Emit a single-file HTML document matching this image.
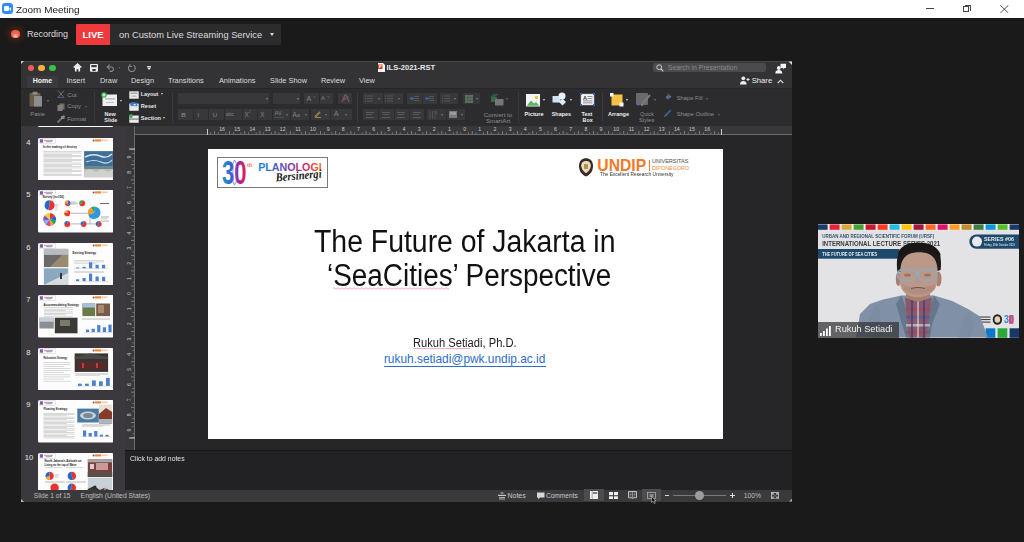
<!DOCTYPE html>
<html><head><meta charset="utf-8">
<style>
*{margin:0;padding:0;box-sizing:border-box}
html,body{width:1024px;height:542px;overflow:hidden;background:#1a1a1a;font-family:"Liberation Sans",sans-serif}
.a{position:absolute}
.t{position:absolute;white-space:nowrap;line-height:1}
</style></head><body>
<!-- Zoom title bar -->
<div class="a" style="left:0;top:0;width:1024px;height:18px;background:#fff"></div>
<div class="a" style="left:2px;top:3px;width:11px;height:11px;border-radius:3px;background:#2d8cff"></div>
<div class="a" style="left:4px;top:6px;width:5px;height:5px;border-radius:1px;background:#fff"></div>
<div class="a" style="left:9px;top:6.5px;width:0;height:0;border-top:2px solid transparent;border-bottom:2px solid transparent;border-right:2.5px solid #fff"></div>
<div class="t" style="left:16.4px;top:4.9px;font-size:9.4px;color:#222;transform:scaleX(1.06);transform-origin:0 0">Zoom Meeting</div>
<!-- window controls -->
<div class="a" style="left:926px;top:8px;width:8px;height:0.9px;background:#444"></div>
<div class="a" style="left:963px;top:6.2px;width:6.2px;height:6.2px;border:0.9px solid #444;background:#fff"></div>
<div class="a" style="left:964.6px;top:4.8px;width:6.2px;height:6.2px;border-top:0.9px solid #444;border-right:0.9px solid #444"></div>
<svg class="a" style="left:1000.3px;top:4.6px" width="8.7" height="8.3"><path d="M0.3 0.3L8.4 8M8.4 0.3L0.3 8" stroke="#444" stroke-width="0.9"/></svg>

<!-- recording bar -->
<div class="a" style="left:11.3px;top:29.7px;width:8.8px;height:8.8px;border-radius:50%;background:radial-gradient(circle at 50% 78%,#f6c8c0 0%,#f46a5c 40%,#f25848 70%);box-shadow:0 0 6px 3px rgba(100,40,15,.7)"></div>
<div class="t" style="left:27px;top:29.5px;font-size:9px;color:#ddd">Recording</div>
<div class="a" style="left:76px;top:24.3px;width:34px;height:20.7px;background:#ee3a3c;border-radius:1px 0 0 1px"></div>
<div class="t" style="left:82.5px;top:30.2px;font-size:9.5px;font-weight:bold;color:#fff">LIVE</div>
<div class="a" style="left:110px;top:24.3px;width:170.5px;height:20.7px;background:#2c2c2e;border-radius:0 1.5px 1.5px 0"></div>
<div class="t" style="left:119px;top:31.1px;font-size:9.3px;color:#dcdcdc">on Custom Live Streaming Service</div>
<div class="a" style="left:270px;top:33px;width:0;height:0;border-left:2.5px solid transparent;border-right:2.5px solid transparent;border-top:3px solid #ddd"></div>

<!-- PowerPoint window -->
<div class="a" id="ppt" style="left:21px;top:60.5px;width:771px;height:441px;background:#262628;overflow:hidden">
  <!-- title + tabs -->
  <div class="a" style="left:0;top:0;width:771px;height:27.5px;background:#333335"></div>
  <div class="a" style="left:0;top:0;width:771px;height:1px;background:#48484a"></div>
  <div class="a" style="left:0;top:27px;width:771px;height:1px;background:#262628"></div>
  <!-- ribbon -->
  <div class="a" style="left:0;top:28px;width:771px;height:37px;background:#2c2c2e"></div>
  <!-- thumbnails -->
<div class="a" style="left:37.5px;top:125.5px;width:75.8px;height:1.8px;background:#fdfdfd;border-radius:0 0 1.6px 1.6px"></div>
<svg class="a" style="left:37.5px;top:137.7px" width="75.8" height="42.50" viewBox="0 0 75.8 42.50"><rect x="0" y="0" width="75.8" height="42.5" rx="1.6" fill="#fdfdfd"/><rect x="1.3" y="0.6" width="16" height="4.6" fill="#fff" stroke="#b8b8c8" stroke-width="0.35"/><rect x="2" y="1.3" width="2.6" height="3.3" fill="#4a6fc8"/><rect x="3.6" y="1.3" width="1.2" height="3.3" fill="#d8406a"/><rect x="6" y="1.8" width="9" height="1.4" fill="#c8a0c8"/><rect x="8" y="3.2" width="6" height="1" fill="#9a9a9a"/><circle cx="55.6" cy="2.4" r="1" fill="#7a5a3a"/><rect x="57" y="1.3" width="6" height="2.2" fill="#f08a3a"/><rect x="63.5" y="1.5" width="6" height="1.6" fill="#f7c8a0"/><text x="4.9" y="9.9" font-family="Liberation Sans" font-weight="bold" font-size="3.3" fill="#222" textLength="34" lengthAdjust="spacingAndGlyphs">In the making of destiny</text><rect x="5.5" y="13.50" width="38.00" height="0.5" fill="#b4b4b4"/><rect x="5.5" y="14.75" width="38.00" height="0.5" fill="#b4b4b4"/><rect x="5.5" y="16.00" width="28.50" height="0.5" fill="#b4b4b4"/><rect x="5.5" y="17.25" width="38.00" height="0.5" fill="#b4b4b4"/><rect x="5.5" y="18.50" width="38.00" height="0.5" fill="#b4b4b4"/><rect x="5.5" y="19.75" width="28.50" height="0.5" fill="#b4b4b4"/><rect x="5.5" y="21.00" width="38.00" height="0.5" fill="#b4b4b4"/><rect x="5.5" y="22.25" width="38.00" height="0.5" fill="#b4b4b4"/><rect x="5.5" y="23.50" width="28.50" height="0.5" fill="#b4b4b4"/><rect x="5.5" y="24.75" width="38.00" height="0.5" fill="#b4b4b4"/><rect x="5.5" y="26.00" width="38.00" height="0.5" fill="#b4b4b4"/><rect x="5.5" y="27.25" width="28.50" height="0.5" fill="#b4b4b4"/><rect x="5.5" y="28.50" width="38.00" height="0.5" fill="#b4b4b4"/><rect x="5.5" y="29.75" width="38.00" height="0.5" fill="#b4b4b4"/><rect x="5.5" y="31.00" width="28.50" height="0.5" fill="#b4b4b4"/><rect x="5.5" y="32.25" width="38.00" height="0.5" fill="#b4b4b4"/><rect x="5.5" y="33.50" width="38.00" height="0.5" fill="#b4b4b4"/><rect x="5.5" y="34.75" width="28.50" height="0.5" fill="#b4b4b4"/><rect x="5.5" y="36.00" width="38.00" height="0.5" fill="#b4b4b4"/><rect x="5.5" y="37.25" width="38.00" height="0.5" fill="#b4b4b4"/><rect x="46.2" y="13.2" width="28.7" height="26" fill="#b8bcc0"/><rect x="46.2" y="13.2" width="28.7" height="17" fill="#3f6f98"/><path d="M47 19Q55 15 62 18T74 16" stroke="#d8e8f0" stroke-width="1.4" fill="none"/><path d="M48 24Q56 21 63 24T74 22" stroke="#c8dce8" stroke-width="1.1" fill="none"/><rect x="46.2" y="28" width="28.7" height="3" fill="#6a8a8a"/><path d="M47 33L52 31L58 34L64 31L70 34L74.9 32V39.2H46.2Z" fill="#d0d0cc"/></svg>
<div class="t" style="left:26.3px;top:138.7px;font-size:7.6px;color:#e8e8e8">4</div>
<svg class="a" style="left:37.5px;top:190.2px" width="75.8" height="42.50" viewBox="0 0 75.8 42.50"><rect x="0" y="0" width="75.8" height="42.5" rx="1.6" fill="#fdfdfd"/><rect x="1.3" y="0.6" width="16" height="4.6" fill="#fff" stroke="#b8b8c8" stroke-width="0.35"/><rect x="2" y="1.3" width="2.6" height="3.3" fill="#4a6fc8"/><rect x="3.6" y="1.3" width="1.2" height="3.3" fill="#d8406a"/><rect x="6" y="1.8" width="9" height="1.4" fill="#c8a0c8"/><rect x="8" y="3.2" width="6" height="1" fill="#9a9a9a"/><circle cx="55.6" cy="2.4" r="1" fill="#7a5a3a"/><rect x="57" y="1.3" width="6" height="2.2" fill="#f08a3a"/><rect x="63.5" y="1.5" width="6" height="1.6" fill="#f7c8a0"/><text x="4.5" y="7.6" font-family="Liberation Sans" font-weight="bold" font-size="3.6" fill="#222" textLength="21.5" lengthAdjust="spacingAndGlyphs">Survey (n=150)</text><path d="M11.7 15.3L11.70 10.30A5 5 0 1 1 10.15 20.06Z" fill="#e8342a"/><path d="M11.7 15.3L10.15 20.06A5 5 0 0 1 11.70 10.30Z" fill="#2a66c8"/><path d="M11.7 29.5L11.70 23.00A6.5 6.5 0 0 1 16.96 25.68Z" fill="#e8342a"/><path d="M11.7 29.5L16.96 25.68A6.5 6.5 0 0 1 18.15 30.31Z" fill="#2a66c8"/><path d="M11.7 29.5L18.15 30.31A6.5 6.5 0 0 1 15.84 34.51Z" fill="#29a84a"/><path d="M11.7 29.5L15.84 34.51A6.5 6.5 0 0 1 12.11 35.99Z" fill="#f29a2a"/><path d="M11.7 29.5L12.11 35.99A6.5 6.5 0 0 1 7.56 34.51Z" fill="#d83aa0"/><path d="M11.7 29.5L7.56 34.51A6.5 6.5 0 0 1 5.40 31.12Z" fill="#5ac8e8"/><path d="M11.7 29.5L5.40 31.12A6.5 6.5 0 0 1 6.69 25.36Z" fill="#9a4ac8"/><path d="M11.7 29.5L6.69 25.36A6.5 6.5 0 0 1 11.70 23.00Z" fill="#e8d42a"/><path d="M33 13.2H40M33 23.3H52M33 33.9H45.6M52 22.7V33.9M45 33.9H60" stroke="#555" stroke-width="0.4" fill="none"/><path d="M29.7 13.2L29.70 10.20A3 3 0 0 1 31.46 15.63Z" fill="#2a66c8"/><path d="M29.7 13.2L31.46 15.63A3 3 0 0 1 26.70 13.20Z" fill="#e8342a"/><path d="M29.7 13.2L26.70 13.20A3 3 0 0 1 29.70 10.20Z" fill="#f29a2a"/><path d="M44.1 13.2L44.10 10.20A3 3 0 1 1 41.25 14.13Z" fill="#e8342a"/><path d="M44.1 13.2L41.25 14.13A3 3 0 0 1 44.10 10.20Z" fill="#29a84a"/><path d="M29.3 23.3L29.30 20.30A3 3 0 1 1 26.45 22.37Z" fill="#e8342a"/><path d="M29.3 23.3L26.45 22.37A3 3 0 0 1 29.30 20.30Z" fill="#f29a2a"/><path d="M29.3 33.9L29.30 30.90A3 3 0 1 1 26.30 33.90Z" fill="#e8342a"/><path d="M29.3 33.9L26.30 33.90A3 3 0 0 1 29.30 30.90Z" fill="#2a66c8"/><path d="M45.6 33.9L45.60 30.90A3 3 0 1 1 43.17 35.66Z" fill="#e8342a"/><path d="M45.6 33.9L43.17 35.66A3 3 0 0 1 45.60 30.90Z" fill="#2a66c8"/><path d="M60.7 33.9L60.70 30.90A3 3 0 1 1 58.94 36.33Z" fill="#e8342a"/><path d="M60.7 33.9L58.94 36.33A3 3 0 0 1 60.70 30.90Z" fill="#2a66c8"/><path d="M56.2 22.7L56.20 16.40A6.3 6.3 0 1 1 50.21 24.65Z" fill="#2a9ad8"/><path d="M56.2 22.7L50.21 24.65A6.3 6.3 0 0 1 53.16 17.18Z" fill="#f29a2a"/><path d="M56.2 22.7L53.16 17.18A6.3 6.3 0 0 1 56.20 16.40Z" fill="#29a84a"/><rect x="63" y="26.00" width="8.00" height="0.5" fill="#aaa"/><rect x="63" y="27.30" width="8.00" height="0.5" fill="#aaa"/><rect x="63" y="28.60" width="6.00" height="0.5" fill="#aaa"/><rect x="63" y="29.90" width="8.00" height="0.5" fill="#aaa"/><rect x="63" y="31.20" width="8.00" height="0.5" fill="#aaa"/><rect x="62" y="13" width="9" height="1" fill="#333" opacity="0.72"/><rect x="17" y="14.00" width="3.00" height="0.5" fill="#c0c0c0"/><rect x="17" y="15.20" width="3.00" height="0.5" fill="#c0c0c0"/><rect x="17" y="16.40" width="2.25" height="0.5" fill="#c0c0c0"/><rect x="17" y="17.60" width="3.00" height="0.5" fill="#c0c0c0"/><rect x="17" y="18.80" width="3.00" height="0.5" fill="#c0c0c0"/><rect x="17" y="20.00" width="2.25" height="0.5" fill="#c0c0c0"/><rect x="33" y="11.00" width="5.00" height="0.5" fill="#c0c0c0"/><rect x="33" y="12.10" width="5.00" height="0.5" fill="#c0c0c0"/><rect x="33" y="13.20" width="3.75" height="0.5" fill="#c0c0c0"/><rect x="33" y="14.30" width="5.00" height="0.5" fill="#c0c0c0"/></svg>
<div class="t" style="left:26.3px;top:191.2px;font-size:7.6px;color:#e8e8e8">5</div>
<svg class="a" style="left:37.5px;top:242.8px" width="75.8" height="42.50" viewBox="0 0 75.8 42.50"><rect x="0" y="0" width="75.8" height="42.5" rx="1.6" fill="#fdfdfd"/><rect x="1.3" y="0.6" width="16" height="4.6" fill="#fff" stroke="#b8b8c8" stroke-width="0.35"/><rect x="2" y="1.3" width="2.6" height="3.3" fill="#4a6fc8"/><rect x="3.6" y="1.3" width="1.2" height="3.3" fill="#d8406a"/><rect x="6" y="1.8" width="9" height="1.4" fill="#c8a0c8"/><rect x="8" y="3.2" width="6" height="1" fill="#9a9a9a"/><circle cx="55.6" cy="2.4" r="1" fill="#7a5a3a"/><rect x="57" y="1.3" width="6" height="2.2" fill="#f08a3a"/><rect x="63.5" y="1.5" width="6" height="1.6" fill="#f7c8a0"/><rect x="5.9" y="5.9" width="24.3" height="18.2" fill="#6a6a66"/><rect x="5.9" y="5.9" width="24.3" height="6" fill="#b8bcc0"/><path d="M12 24.1L24 12H30.2V24.1Z" fill="#9a8a70"/><rect x="5.9" y="25.3" width="24.3" height="16.5" fill="#8aa8c0"/><path d="M5.9 41.8L30.2 30V41.8Z" fill="#d8dcde"/><rect x="22" y="30" width="2" height="6" fill="#333"/><text x="34.5" y="10.8" font-family="Liberation Sans" font-weight="bold" font-size="3.8" fill="#222" textLength="23.7" lengthAdjust="spacingAndGlyphs">Existing Strategy</text><rect x="36" y="17.50" width="30.00" height="0.5" fill="#b8b8b8"/><rect x="36" y="18.70" width="30.00" height="0.5" fill="#b8b8b8"/><rect x="36" y="19.90" width="22.50" height="0.5" fill="#b8b8b8"/><rect x="36" y="25.3" width="34.5" height="0.3" fill="#aaa"/><rect x="38.00" y="24.50" width="3.2" height="0.8" fill="#4f7fd0"/><rect x="44.50" y="23.80" width="3.2" height="1.5" fill="#4f7fd0"/><rect x="51.00" y="19.30" width="3.2" height="6" fill="#4f7fd0"/><rect x="57.50" y="21.80" width="3.2" height="3.5" fill="#4f7fd0"/><rect x="64.00" y="21.80" width="3.2" height="3.5" fill="#4f7fd0"/><rect x="36" y="28.00" width="30.00" height="0.5" fill="#b8b8b8"/><rect x="36" y="29.20" width="30.00" height="0.5" fill="#b8b8b8"/><rect x="36" y="38.1" width="34.5" height="0.3" fill="#aaa"/><rect x="38.00" y="36.30" width="3.2" height="1.8" fill="#4f7fd0"/><rect x="44.50" y="35.10" width="3.2" height="3" fill="#4f7fd0"/><rect x="51.00" y="30.60" width="3.2" height="7.5" fill="#4f7fd0"/><rect x="57.50" y="33.50" width="3.2" height="4.6" fill="#4f7fd0"/><rect x="64.00" y="33.90" width="3.2" height="4.2" fill="#4f7fd0"/></svg>
<div class="t" style="left:26.3px;top:243.8px;font-size:7.6px;color:#e8e8e8">6</div>
<svg class="a" style="left:37.5px;top:295.3px" width="75.8" height="42.50" viewBox="0 0 75.8 42.50"><rect x="0" y="0" width="75.8" height="42.5" rx="1.6" fill="#fdfdfd"/><rect x="1.3" y="0.6" width="16" height="4.6" fill="#fff" stroke="#b8b8c8" stroke-width="0.35"/><rect x="2" y="1.3" width="2.6" height="3.3" fill="#4a6fc8"/><rect x="3.6" y="1.3" width="1.2" height="3.3" fill="#d8406a"/><rect x="6" y="1.8" width="9" height="1.4" fill="#c8a0c8"/><rect x="8" y="3.2" width="6" height="1" fill="#9a9a9a"/><circle cx="55.6" cy="2.4" r="1" fill="#7a5a3a"/><rect x="57" y="1.3" width="6" height="2.2" fill="#f08a3a"/><rect x="63.5" y="1.5" width="6" height="1.6" fill="#f7c8a0"/><text x="5.5" y="10.8" font-family="Liberation Sans" font-weight="bold" font-size="3.8" fill="#222" textLength="35.5" lengthAdjust="spacingAndGlyphs">Accommodating Strategy</text><rect x="6" y="12.50" width="29.00" height="0.5" fill="#b4b4b4"/><rect x="6" y="13.90" width="29.00" height="0.5" fill="#b4b4b4"/><rect x="6" y="15.30" width="21.75" height="0.5" fill="#b4b4b4"/><rect x="6" y="16.70" width="29.00" height="0.5" fill="#b4b4b4"/><rect x="6" y="18.10" width="29.00" height="0.5" fill="#b4b4b4"/><rect x="6" y="19.50" width="21.75" height="0.5" fill="#b4b4b4"/><rect x="6" y="20.90" width="29.00" height="0.5" fill="#b4b4b4"/><rect x="44.4" y="8.5" width="12.8" height="12.6" fill="#6a7a4a"/><rect x="44.4" y="8.5" width="12.8" height="4" fill="#a8c0d8"/><rect x="58.2" y="8.5" width="13.8" height="12.6" fill="#7a5a48"/><rect x="60" y="10" width="6" height="8" fill="#a88a70"/><rect x="1.4" y="22.7" width="14.4" height="10.8" fill="#8a8f94"/><rect x="1.4" y="22.7" width="14.4" height="4" fill="#c8d0d8"/><rect x="16.8" y="22.7" width="22.7" height="15.6" fill="#3a3a36"/><rect x="22" y="25" width="10" height="6" fill="#7a7a70"/><rect x="44" y="23.00" width="28.00" height="0.5" fill="#b8b8b8"/><rect x="44" y="24.20" width="28.00" height="0.5" fill="#b8b8b8"/><rect x="46" y="37.1" width="30.0" height="0.3" fill="#aaa"/><rect x="48.00" y="34.60" width="3.2" height="2.5" fill="#4f7fd0"/><rect x="53.60" y="33.80" width="3.2" height="3.3" fill="#4f7fd0"/><rect x="59.20" y="30.10" width="3.2" height="7" fill="#4f7fd0"/><rect x="64.80" y="32.30" width="3.2" height="4.8" fill="#4f7fd0"/><rect x="70.40" y="29.60" width="3.2" height="7.5" fill="#4f7fd0"/></svg>
<div class="t" style="left:26.3px;top:296.3px;font-size:7.6px;color:#e8e8e8">7</div>
<svg class="a" style="left:37.5px;top:347.8px" width="75.8" height="42.50" viewBox="0 0 75.8 42.50"><rect x="0" y="0" width="75.8" height="42.5" rx="1.6" fill="#fdfdfd"/><rect x="1.3" y="0.6" width="16" height="4.6" fill="#fff" stroke="#b8b8c8" stroke-width="0.35"/><rect x="2" y="1.3" width="2.6" height="3.3" fill="#4a6fc8"/><rect x="3.6" y="1.3" width="1.2" height="3.3" fill="#d8406a"/><rect x="6" y="1.8" width="9" height="1.4" fill="#c8a0c8"/><rect x="8" y="3.2" width="6" height="1" fill="#9a9a9a"/><circle cx="55.6" cy="2.4" r="1" fill="#7a5a3a"/><rect x="57" y="1.3" width="6" height="2.2" fill="#f08a3a"/><rect x="63.5" y="1.5" width="6" height="1.6" fill="#f7c8a0"/><text x="5.4" y="10.9" font-family="Liberation Sans" font-weight="bold" font-size="3.8" fill="#222" textLength="23.9" lengthAdjust="spacingAndGlyphs">Relocation Strategy</text><rect x="5.5" y="14.00" width="27.00" height="0.5" fill="#b4b4b4"/><rect x="5.5" y="16.10" width="27.00" height="0.5" fill="#b4b4b4"/><rect x="5.5" y="18.20" width="20.25" height="0.5" fill="#b4b4b4"/><rect x="5.5" y="20.30" width="27.00" height="0.5" fill="#b4b4b4"/><rect x="5.5" y="22.40" width="27.00" height="0.5" fill="#b4b4b4"/><rect x="5.5" y="24.50" width="20.25" height="0.5" fill="#b4b4b4"/><rect x="5.5" y="26.60" width="27.00" height="0.5" fill="#b4b4b4"/><rect x="5.5" y="28.70" width="27.00" height="0.5" fill="#b4b4b4"/><rect x="5.5" y="30.80" width="20.25" height="0.5" fill="#b4b4b4"/><rect x="5.5" y="32.90" width="27.00" height="0.5" fill="#b4b4b4"/><rect x="36.7" y="5.4" width="33.4" height="18.5" fill="#3a3430"/><path d="M36.7 9L52 5.4L70.1 9V11H36.7Z" fill="#4a4a48"/><rect x="40" y="14" width="28" height="7" fill="#5a2a2a"/><rect x="44" y="15" width="2" height="5" fill="#c83a3a"/><rect x="58" y="15" width="2" height="5" fill="#c83a3a"/><rect x="37" y="25.00" width="33.00" height="0.5" fill="#b8b8b8"/><rect x="37" y="26.20" width="33.00" height="0.5" fill="#b8b8b8"/><rect x="37" y="27.40" width="24.75" height="0.5" fill="#b8b8b8"/><rect x="38" y="37.9" width="37" height="0.3" fill="#aaa"/><rect x="40.00" y="35.70" width="3.8" height="2.2" fill="#4f7fd0"/><rect x="47.00" y="35.70" width="3.8" height="2.2" fill="#4f7fd0"/><rect x="54.00" y="32.40" width="3.8" height="5.5" fill="#4f7fd0"/><rect x="61.00" y="33.30" width="3.8" height="4.6" fill="#4f7fd0"/><rect x="68.00" y="29.90" width="3.8" height="8" fill="#4f7fd0"/></svg>
<div class="t" style="left:26.3px;top:348.8px;font-size:7.6px;color:#e8e8e8">8</div>
<svg class="a" style="left:37.5px;top:400.3px" width="75.8" height="42.50" viewBox="0 0 75.8 42.50"><rect x="0" y="0" width="75.8" height="42.5" rx="1.6" fill="#fdfdfd"/><rect x="1.3" y="0.6" width="16" height="4.6" fill="#fff" stroke="#b8b8c8" stroke-width="0.35"/><rect x="2" y="1.3" width="2.6" height="3.3" fill="#4a6fc8"/><rect x="3.6" y="1.3" width="1.2" height="3.3" fill="#d8406a"/><rect x="6" y="1.8" width="9" height="1.4" fill="#c8a0c8"/><rect x="8" y="3.2" width="6" height="1" fill="#9a9a9a"/><circle cx="55.6" cy="2.4" r="1" fill="#7a5a3a"/><rect x="57" y="1.3" width="6" height="2.2" fill="#f08a3a"/><rect x="63.5" y="1.5" width="6" height="1.6" fill="#f7c8a0"/><text x="5.4" y="10.5" font-family="Liberation Sans" font-weight="bold" font-size="3.8" fill="#222" textLength="23.9" lengthAdjust="spacingAndGlyphs">Floating Strategy</text><rect x="5.5" y="13.00" width="31.00" height="0.5" fill="#b4b4b4"/><rect x="5.5" y="14.30" width="31.00" height="0.5" fill="#b4b4b4"/><rect x="5.5" y="15.60" width="23.25" height="0.5" fill="#b4b4b4"/><rect x="5.5" y="16.90" width="31.00" height="0.5" fill="#b4b4b4"/><rect x="5.5" y="18.20" width="31.00" height="0.5" fill="#b4b4b4"/><rect x="5.5" y="19.50" width="23.25" height="0.5" fill="#b4b4b4"/><rect x="5.5" y="20.80" width="31.00" height="0.5" fill="#b4b4b4"/><rect x="5.5" y="22.10" width="31.00" height="0.5" fill="#b4b4b4"/><rect x="5.5" y="23.40" width="23.25" height="0.5" fill="#b4b4b4"/><rect x="5.5" y="24.70" width="31.00" height="0.5" fill="#b4b4b4"/><rect x="5.5" y="26.00" width="31.00" height="0.5" fill="#b4b4b4"/><rect x="5.5" y="27.30" width="23.25" height="0.5" fill="#b4b4b4"/><rect x="5.5" y="28.60" width="31.00" height="0.5" fill="#b4b4b4"/><rect x="5.5" y="29.90" width="31.00" height="0.5" fill="#b4b4b4"/><rect x="5.5" y="31.20" width="23.25" height="0.5" fill="#b4b4b4"/><rect x="5.5" y="32.50" width="31.00" height="0.5" fill="#b4b4b4"/><rect x="5.5" y="33.80" width="31.00" height="0.5" fill="#b4b4b4"/><rect x="5.5" y="35.10" width="23.25" height="0.5" fill="#b4b4b4"/><rect x="5.5" y="36.40" width="31.00" height="0.5" fill="#b4b4b4"/><rect x="5.5" y="37.70" width="31.00" height="0.5" fill="#b4b4b4"/><rect x="39.3" y="8.6" width="21.5" height="13.9" fill="#4a7aa0"/><ellipse cx="50" cy="15.5" rx="8" ry="4" fill="#c8d4dc"/><ellipse cx="50" cy="15.5" rx="5" ry="2.5" fill="#7a8a94"/><rect x="61" y="4.6" width="13.1" height="18.9" fill="#e8e0d8"/><path d="M61 14L68 8L74.1 12V23.5H61Z" fill="#8a3a2a"/><rect x="61" y="19" width="13.1" height="4.5" fill="#a8b8c0"/><rect x="44" y="24.00" width="28.00" height="0.5" fill="#b8b8b8"/><rect x="44" y="25.20" width="28.00" height="0.5" fill="#b8b8b8"/><rect x="44" y="26.40" width="21.00" height="0.5" fill="#b8b8b8"/><rect x="43" y="36.5" width="30.0" height="0.3" fill="#aaa"/><rect x="45.00" y="30.50" width="3.2" height="6" fill="#4f7fd0"/><rect x="50.60" y="33.00" width="3.2" height="3.5" fill="#4f7fd0"/><rect x="56.20" y="31.00" width="3.2" height="5.5" fill="#4f7fd0"/><rect x="61.80" y="34.70" width="3.2" height="1.8" fill="#4f7fd0"/><rect x="67.40" y="34.80" width="3.2" height="1.7" fill="#4f7fd0"/></svg>
<div class="t" style="left:26.3px;top:401.3px;font-size:7.6px;color:#e8e8e8">9</div>
<svg class="a" style="left:37.5px;top:452.8px" width="75.8" height="36.90" viewBox="0 0 75.8 36.90"><rect x="0" y="0" width="75.8" height="42.5" rx="1.6" fill="#fdfdfd"/><rect x="1.3" y="0.6" width="16" height="4.6" fill="#fff" stroke="#b8b8c8" stroke-width="0.35"/><rect x="2" y="1.3" width="2.6" height="3.3" fill="#4a6fc8"/><rect x="3.6" y="1.3" width="1.2" height="3.3" fill="#d8406a"/><rect x="6" y="1.8" width="9" height="1.4" fill="#c8a0c8"/><rect x="8" y="3.2" width="6" height="1" fill="#9a9a9a"/><circle cx="55.6" cy="2.4" r="1" fill="#7a5a3a"/><rect x="57" y="1.3" width="6" height="2.2" fill="#f08a3a"/><rect x="63.5" y="1.5" width="6" height="1.6" fill="#f7c8a0"/><text x="6.6" y="8.8" font-family="Liberation Sans" font-weight="bold" font-size="3.4" fill="#222" textLength="37" lengthAdjust="spacingAndGlyphs">North Jakarta&#8217;s Attitude on</text><text x="6.6" y="12.9" font-family="Liberation Sans" font-weight="bold" font-size="3.4" fill="#222" textLength="32" lengthAdjust="spacingAndGlyphs">Living on the top of Water</text><rect x="7" y="14.20" width="17.00" height="0.5" fill="#b4b4b4"/><rect x="28" y="14.20" width="17.00" height="0.5" fill="#b4b4b4"/><path d="M11.6 22.9L11.60 18.70A4.2 4.2 0 0 1 11.60 27.10Z" fill="#e8342a"/><path d="M11.6 22.9L11.60 27.10A4.2 4.2 0 0 1 7.61 24.20Z" fill="#f2a42a"/><path d="M11.6 22.9L7.61 24.20A4.2 4.2 0 0 1 11.60 18.70Z" fill="#2a66c8"/><path d="M33.8 22.9L33.80 18.70A4.2 4.2 0 0 1 35.10 26.89Z" fill="#e8342a"/><path d="M33.8 22.9L35.10 26.89A4.2 4.2 0 1 1 33.80 18.70Z" fill="#2a66c8"/><rect x="17" y="21.00" width="4.00" height="0.5" fill="#c0c0c0"/><rect x="17" y="22.20" width="4.00" height="0.5" fill="#c0c0c0"/><rect x="17" y="23.40" width="3.00" height="0.5" fill="#c0c0c0"/><rect x="17" y="24.60" width="4.00" height="0.5" fill="#c0c0c0"/><rect x="7" y="28.00" width="20.00" height="0.5" fill="#b8b8b8"/><rect x="7" y="29.10" width="20.00" height="0.5" fill="#b8b8b8"/><rect x="28" y="28.00" width="20.00" height="0.5" fill="#b8b8b8"/><rect x="28" y="29.10" width="20.00" height="0.5" fill="#b8b8b8"/><circle cx="16.6" cy="34.8" r="4.2" fill="#e8342a"/><path d="M33.8 34.8L33.80 30.60A4.2 4.2 0 1 1 31.33 38.20Z" fill="#e8342a"/><path d="M33.8 34.8L31.33 38.20A4.2 4.2 0 0 1 33.80 30.60Z" fill="#2a66c8"/><rect x="49.8" y="6.3" width="24.4" height="17.7" fill="#7a4040"/><rect x="49.8" y="6.3" width="24.4" height="3" fill="#a8a8a8"/><rect x="58" y="10" width="12" height="7" fill="#c89a9a"/><rect x="52" y="11" width="4" height="5" fill="#d8d0d0"/><rect x="49.8" y="19" width="24.4" height="5" fill="#5a5048"/><rect x="49.8" y="24.6" width="24.4" height="17.9" fill="#c8d0d8"/><path d="M49.8 42.5V36L56 33L62 37L66 35L74.2 38V42.5Z" fill="#3a3430"/><circle cx="57" cy="34" r="1.5" fill="#2a2a2a"/><circle cx="67" cy="36" r="1.3" fill="#c87a5a"/></svg>
<div class="t" style="left:24.8px;top:453.8px;font-size:7.6px;color:#e8e8e8">10</div>

<div class="a" style="left:791px;top:61px;width:1px;height:440px;background:#4a4a4c"></div>
<!-- rulers -->
  <div class="a" style="left:104px;top:65px;width:667px;height:9px;background:#38383a"></div>
  <div class="a" style="left:104px;top:73px;width:667px;height:1px;background:#6a6a6c"></div>
  <div class="a" style="left:104px;top:65px;width:10px;height:324px;background:#38383a"></div>
  <div class="a" style="left:113px;top:65px;width:1px;height:324px;background:#6a6a6c"></div>
  <!-- thumbnails panel -->
  <div class="a" style="left:0;top:65px;width:104px;height:364px;background:#3b393d"></div>
  <!-- notes -->
  <div class="a" style="left:104px;top:389px;width:667px;height:1px;background:#161618"></div>
  <div class="a" style="left:104px;top:390px;width:667px;height:39px;background:#222224"></div>
  <!-- status bar -->
  <div class="a" style="left:0;top:429px;width:771px;height:12px;background:#3a3a3c"></div>
</div>

<!-- ppt title row -->
<div class="a" style="left:27.5px;top:64.5px;width:6.6px;height:6.6px;border-radius:50%;background:#f25b58"></div>
<div class="a" style="left:38.2px;top:64.5px;width:6.6px;height:6.6px;border-radius:50%;background:#f6b53a"></div>
<div class="a" style="left:49px;top:64.5px;width:6.6px;height:6.6px;border-radius:50%;background:#3cc346"></div>
<svg class="a" style="left:72.5px;top:63.3px" width="9" height="9" viewBox="0 0 9 9"><path d="M0.7 4.6L4.5 1L8.3 4.6" stroke="#f2f2f2" stroke-width="1.4" fill="none"/><path d="M1.9 4.2L4.5 1.8L7.1 4.2V8.6H5.4V6.2H3.6V8.6H1.9Z" fill="#f2f2f2"/></svg>
<svg class="a" style="left:89.5px;top:64px" width="8" height="7.8" viewBox="0 0 8 7.8"><rect x="0" y="0" width="8" height="7.8" rx="0.8" fill="#eee"/><rect x="1.3" y="1" width="5.4" height="2.2" fill="#3a3a3c"/><rect x="2.3" y="5" width="3.4" height="2" fill="#3a3a3c"/></svg>
<svg class="a" style="left:105.8px;top:64.2px" width="16" height="8" viewBox="0 0 16 8"><path d="M1.5 3H5.8A2.3 2.3 0 0 1 5.8 7.4H3.5" stroke="#8a8a8c" stroke-width="1.1" fill="none"/><path d="M3.8 0.6L1.2 3L3.8 5.4" stroke="#8a8a8c" stroke-width="1.1" fill="none"/><circle cx="13.4" cy="3.7" r="0.6" fill="#777"/></svg>
<svg class="a" style="left:127.3px;top:63.8px" width="10" height="8.5" viewBox="0 0 10 8.5"><path d="M6.6 1.3A3.4 3.4 0 1 1 2.6 1.6" stroke="#8a8a8c" stroke-width="1.1" fill="none"/><path d="M2.8 0.2V2.4H5" stroke="#8a8a8c" stroke-width="1" fill="none"/></svg>
<svg class="a" style="left:146.8px;top:66.2px" width="4.2" height="4" viewBox="0 0 4.2 4"><rect x="0" y="0" width="4.2" height="0.9" fill="#eee"/><path d="M0 1.6H4.2L2.1 4Z" fill="#eee"/></svg>
<svg class="a" style="left:377.5px;top:63px" width="7" height="9" viewBox="0 0 7 9"><path d="M0 0H5L7 2V9H0Z" fill="#f4f4f4"/><rect x="0" y="1.5" width="4.5" height="4.5" fill="#d24726"/><text x="1" y="5.3" font-size="4" fill="#fff" font-family="Liberation Sans" font-weight="bold">P</text></svg>
<div class="t" style="left:386.5px;top:64px;font-size:7.55px;font-weight:bold;color:#e8e8e8">ILS-2021-RST</div>
<div class="a" style="left:652.8px;top:63px;width:113px;height:9px;border-radius:2px;background:#4b4b4d"></div>
<svg class="a" style="left:655.5px;top:63.8px" width="8" height="8" viewBox="0 0 8 8"><circle cx="3.2" cy="3.2" r="2.4" stroke="#ccc" stroke-width="1" fill="none"/><path d="M5 5L7.3 7.3" stroke="#ccc" stroke-width="1.1"/></svg>
<div class="t" style="left:667.8px;top:65.1px;font-size:6.9px;color:#8a8a8c">Search in Presentation</div>
<svg class="a" style="left:774.5px;top:62.5px" width="12" height="11" viewBox="0 0 12 11"><path d="M5.5 0.8H11V5H9.5L8.3 6.5V5H5.5Z" fill="#f4f4f4"/><circle cx="3.8" cy="5" r="1.9" fill="#f4f4f4"/><path d="M0.3 10.5C0.3 7.8 2 7 3.8 7C5.6 7 7.3 7.8 7.3 10.5Z" fill="#f4f4f4"/></svg>
<svg class="a" style="left:787.5px;top:60.5px" width="4.5" height="4.5" viewBox="0 0 4.5 4.5"><path d="M0.5 0.5H4V4Z" fill="#d8d8d8"/></svg>
<svg class="a" style="left:21px;top:60.5px" width="3" height="3" viewBox="0 0 3 3"><path d="M0 0H3L0 3Z" fill="#cfcfcf"/></svg>
<svg class="a" style="left:21px;top:498.5px" width="3" height="3" viewBox="0 0 3 3"><path d="M0 0V3H3Z" fill="#bdbdbd"/></svg>
<svg class="a" style="left:788.5px;top:498px" width="3.5" height="3.5" viewBox="0 0 3.5 3.5"><path d="M3.5 0V3.5H0Z" fill="#a8a8a8"/></svg>
<!-- tabs -->
<div class="a" style="left:26.7px;top:76px;width:31px;height:11.5px;background:#3a3a3c;border-radius:1px"></div>
<div class="t" style="left:32.8px;top:76.9px;font-size:6.98px;font-weight:bold;color:#f4f4f4">Home</div>
<div class="t" style="left:66.5px;top:76.9px;font-size:7.4px;font-weight:normal;color:#dcdcde">Insert</div>
<div class="t" style="left:100px;top:76.9px;font-size:7.4px;font-weight:normal;color:#dcdcde">Draw</div>
<div class="t" style="left:131px;top:76.9px;font-size:7.4px;font-weight:normal;color:#dcdcde">Design</div>
<div class="t" style="left:167.9px;top:76.9px;font-size:7.4px;font-weight:normal;color:#dcdcde">Transitions</div>
<div class="t" style="left:218.9px;top:76.9px;font-size:7.4px;font-weight:normal;color:#dcdcde">Animations</div>
<div class="t" style="left:270px;top:76.9px;font-size:7.4px;font-weight:normal;color:#dcdcde">Slide Show</div>
<div class="t" style="left:320.9px;top:76.9px;font-size:7.4px;font-weight:normal;color:#dcdcde">Review</div>
<div class="t" style="left:359px;top:76.9px;font-size:7.4px;font-weight:normal;color:#dcdcde">View</div>
<svg class="a" style="left:740px;top:76px" width="10" height="9" viewBox="0 0 10 9"><circle cx="3.3" cy="2.3" r="1.9" fill="#eee"/><path d="M0 8.5C0 5.8 1.5 5 3.3 5C5.1 5 6.6 5.8 6.6 8.5Z" fill="#eee"/><path d="M6.5 3.5H9.5M8 2V5" stroke="#eee" stroke-width="1"/></svg>
<div class="t" style="left:751.7px;top:76.5px;font-size:7.7px;color:#ececec">Share</div>
<svg class="a" style="left:776.5px;top:78.5px" width="7" height="5" viewBox="0 0 7 5"><path d="M0.8 4L3.5 1.2L6.2 4" stroke="#ddd" stroke-width="1.1" fill="none"/></svg>

<!-- ribbon -->
<svg class="a" style="left:28.5px;top:91px" width="14" height="16" viewBox="0 0 14 16"><rect x="0.5" y="2" width="11" height="13.5" rx="1" fill="#6b5a45"/><rect x="3.5" y="0.8" width="5" height="3" rx="0.8" fill="#8a8a8a"/><rect x="5" y="5" width="8" height="10.5" fill="#8d8d8f"/></svg>
<div class="a" style="left:46.5px;top:99.5px;width:0;height:0;border-left:1.6px solid transparent;border-right:1.6px solid transparent;border-top:2px solid #777"></div>
<div class="t" style="left:30.3px;top:112.0px;font-size:5.75px;font-weight:normal;color:#8c8c8e">Paste</div>
<svg class="a" style="left:56.5px;top:89.5px" width="8" height="8" viewBox="0 0 8 8"><path d="M1 0.5L6.5 7M7 0.5L1.5 7" stroke="#777" stroke-width="0.9"/><path d="M0.5 7.5H7.5" stroke="#4a6a9a" stroke-width="0.8"/></svg>
<div class="t" style="left:67.3px;top:91.5px;font-size:6.04px;font-weight:normal;color:#8c8c8e">Cut</div>
<svg class="a" style="left:56.5px;top:102.5px" width="8" height="8" viewBox="0 0 8 8"><rect x="2.5" y="0.5" width="5" height="6" fill="#6e6e70"/><rect x="0.5" y="2" width="5" height="6" fill="#7e7e80"/></svg>
<div class="t" style="left:67.3px;top:104px;font-size:5.87px;font-weight:normal;color:#8c8c8e">Copy</div>
<div class="a" style="left:84.5px;top:106px;width:0;height:0;border-left:1.6px solid transparent;border-right:1.6px solid transparent;border-top:2px solid #666"></div>
<svg class="a" style="left:56.5px;top:114.5px" width="8" height="8" viewBox="0 0 8 8"><path d="M0.5 7.5L4 4L7.5 0.5" stroke="#6e6e70" stroke-width="2"/><rect x="4" y="1" width="3.5" height="3" fill="#8a8a8c"/></svg>
<div class="t" style="left:67.2px;top:116.1px;font-size:6.0px;font-weight:normal;color:#8c8c8e">Format</div>
<div class="a" style="left:93.8px;top:91.5px;width:0.8px;height:31px;background:#3a3a3c;border-radius:0px;"></div>
<svg class="a" style="left:100.5px;top:91.5px" width="17" height="15" viewBox="0 0 17 15"><rect x="1.5" y="2.5" width="14.5" height="11.5" fill="#f0f0f0"/><rect x="4" y="6" width="10" height="1.6" fill="#bdbdbd"/><rect x="5" y="10" width="8" height="1" fill="#bdbdbd"/><circle cx="3" cy="3" r="2.8" fill="#35b14a"/><path d="M3 1.3V4.7M1.3 3H4.7" stroke="#fff" stroke-width="0.9"/></svg>
<div class="a" style="left:119.8px;top:99.5px;width:0;height:0;border-left:1.6px solid transparent;border-right:1.6px solid transparent;border-top:2px solid #ccc"></div>
<div class="t" style="left:104.6px;top:112.1px;font-size:5.5px;font-weight:bold;color:#e8e8e8">New</div>
<div class="t" style="left:104.3px;top:118.4px;font-size:5.4px;font-weight:bold;color:#e8e8e8">Slide</div>
<svg class="a" style="left:129px;top:90.5px" width="10" height="8" viewBox="0 0 10 8"><rect x="0.3" y="0.3" width="9.4" height="7.4" fill="#eaeaea"/><rect x="1.5" y="1.6" width="7" height="1.2" fill="#999"/><rect x="2.5" y="4.6" width="5" height="1" fill="#aaa"/></svg>
<div class="t" style="left:140.8px;top:91.5px;font-size:5.37px;font-weight:bold;color:#e8e8e8">Layout</div>
<div class="a" style="left:160.8px;top:93.3px;width:0;height:0;border-left:1.6px solid transparent;border-right:1.6px solid transparent;border-top:2px solid #ccc"></div>
<svg class="a" style="left:129px;top:102px" width="10" height="9" viewBox="0 0 10 9"><rect x="0.3" y="1.5" width="9.4" height="7.3" fill="#eaeaea"/><rect x="1.5" y="3" width="7" height="1.2" fill="#999"/><path d="M2 2.5A3 3 0 0 1 7.5 2.5L8 0.5" stroke="#2f7ad8" stroke-width="1.4" fill="none"/><circle cx="3" cy="2" r="1.8" fill="#2f7ad8"/></svg>
<div class="t" style="left:140.8px;top:103.5px;font-size:5.58px;font-weight:bold;color:#e8e8e8">Reset</div>
<svg class="a" style="left:129px;top:113.5px" width="10" height="9" viewBox="0 0 10 9"><rect x="0.3" y="1.5" width="9.4" height="7.3" fill="#eaeaea"/><rect x="0.3" y="4.6" width="9.4" height="0.9" fill="#555"/><circle cx="2" cy="2" r="1.9" fill="#35b14a"/></svg>
<div class="t" style="left:140.8px;top:115.6px;font-size:5.59px;font-weight:bold;color:#e8e8e8">Section</div>
<div class="a" style="left:163.2px;top:117.4px;width:0;height:0;border-left:1.6px solid transparent;border-right:1.6px solid transparent;border-top:2px solid #ccc"></div>
<div class="a" style="left:171.8px;top:91.5px;width:0.8px;height:31px;background:#3a3a3c;border-radius:0px;"></div>
<div class="a" style="left:177.5px;top:92.8px;width:91.5px;height:11px;background:#38383a;border-radius:1px;"></div>
<div class="a" style="left:266px;top:97.6px;width:0;height:0;border-left:1.6px solid transparent;border-right:1.6px solid transparent;border-top:2px solid #888"></div>
<div class="a" style="left:273px;top:92.8px;width:27px;height:11px;background:#38383a;border-radius:1px;"></div>
<div class="a" style="left:296.7px;top:97.6px;width:0;height:0;border-left:1.6px solid transparent;border-right:1.6px solid transparent;border-top:2px solid #888"></div>
<div class="a" style="left:304px;top:92.8px;width:29.4px;height:11px;background:#38383a;border-radius:1px;"></div>
<div class="a" style="left:318.5px;top:92.8px;width:0.6px;height:11px;background:#2c2c2e;border-radius:0px;"></div>
<div class="t" style="left:306.5px;top:94.8px;font-size:7px;font-weight:normal;color:#828284">A</div>
<div class="t" style="left:313.3px;top:95px;font-size:4px;font-weight:normal;color:#5a74a8">˄</div>
<div class="t" style="left:321px;top:94.8px;font-size:6px;font-weight:normal;color:#828284">A</div>
<div class="t" style="left:327.3px;top:95px;font-size:4px;font-weight:normal;color:#5a74a8">˅</div>
<div class="a" style="left:337.8px;top:92.8px;width:14.1px;height:11px;background:#38383a;border-radius:1px;"></div>
<svg class="a" style="left:340.5px;top:94px" width="9" height="9" viewBox="0 0 9 9"><path d="M1 8L4 1H5L8 8" stroke="#6a5a62" stroke-width="1.3" fill="none"/><path d="M1.5 6.5L7.5 2.5" stroke="#7a4a58" stroke-width="1.8"/></svg>
<div class="a" style="left:177.5px;top:109px;width:131px;height:11px;background:#38383a;border-radius:1px;"></div>
<div class="a" style="left:193px;top:109px;width:0.6px;height:11px;background:#2c2c2e;border-radius:0px;"></div>
<div class="a" style="left:208px;top:109px;width:0.6px;height:11px;background:#2c2c2e;border-radius:0px;"></div>
<div class="a" style="left:224px;top:109px;width:0.6px;height:11px;background:#2c2c2e;border-radius:0px;"></div>
<div class="a" style="left:242px;top:109px;width:0.6px;height:11px;background:#2c2c2e;border-radius:0px;"></div>
<div class="a" style="left:257px;top:109px;width:0.6px;height:11px;background:#2c2c2e;border-radius:0px;"></div>
<div class="a" style="left:272px;top:109px;width:0.6px;height:11px;background:#2c2c2e;border-radius:0px;"></div>
<div class="a" style="left:290px;top:109px;width:0.6px;height:11px;background:#2c2c2e;border-radius:0px;"></div>
<div class="t" style="left:181.3px;top:112.2px;font-size:6.2px;font-weight:bold;color:#828284">B</div>
<div class="t" style="left:197.5px;top:112.2px;font-size:6.2px;font-weight:normal;color:#828284">I</div>
<div class="t" style="left:212.7px;top:112.0px;font-size:6.2px;font-weight:normal;color:#828284">U</div>
<div class="t" style="left:225.7px;top:112px;font-size:5px;font-weight:normal;color:#828284">abc</div>
<div class="t" style="left:244.5px;top:112px;font-size:6.3px;font-weight:normal;color:#828284">X</div>
<div class="t" style="left:249px;top:110.5px;font-size:4px;font-weight:normal;color:#828284">²</div>
<div class="t" style="left:260.2px;top:112.0px;font-size:6.3px;font-weight:normal;color:#828284">X</div>
<div class="t" style="left:274.5px;top:110.7px;font-size:5.8px;font-weight:normal;color:#828284">AV</div>
<div class="a" style="left:274px;top:117px;width:10px;height:0.6px;background:#3e5272;border-radius:0px;"></div>
<div class="a" style="left:286.2px;top:113.8px;width:0;height:0;border-left:1.6px solid transparent;border-right:1.6px solid transparent;border-top:2px solid #777"></div>
<div class="t" style="left:292.5px;top:111.7px;font-size:6.5px;font-weight:normal;color:#828284">A</div>
<div class="t" style="left:297px;top:113px;font-size:5px;font-weight:normal;color:#828284">a</div>
<div class="a" style="left:305px;top:113.8px;width:0;height:0;border-left:1.6px solid transparent;border-right:1.6px solid transparent;border-top:2px solid #777"></div>
<div class="a" style="left:311.4px;top:109px;width:40.6px;height:11px;background:#38383a;border-radius:1px;"></div>
<svg class="a" style="left:314px;top:110px" width="8" height="8" viewBox="0 0 8 8"><path d="M1 7L6 2" stroke="#8a7a50" stroke-width="2.2"/><path d="M1 7.5H7" stroke="#9a8a4a" stroke-width="1"/></svg>
<div class="a" style="left:324.5px;top:113.8px;width:0;height:0;border-left:1.6px solid transparent;border-right:1.6px solid transparent;border-top:2px solid #777"></div>
<div class="a" style="left:330px;top:109px;width:0.6px;height:11px;background:#2c2c2e;border-radius:0px;"></div>
<div class="t" style="left:334px;top:110.5px;font-size:6.8px;font-weight:normal;color:#828284">A</div>
<div class="a" style="left:345px;top:113.8px;width:0;height:0;border-left:1.6px solid transparent;border-right:1.6px solid transparent;border-top:2px solid #777"></div>
<div class="a" style="left:357px;top:91.5px;width:0.8px;height:31px;background:#3a3a3c;border-radius:0px;"></div>
<div class="a" style="left:362.8px;top:92.8px;width:39.9px;height:11px;background:#38383a;border-radius:1px;"></div>
<div class="a" style="left:382.7px;top:92.8px;width:0.6px;height:11px;background:#2c2c2e;border-radius:0px;"></div>
<svg class="a" style="left:364.5px;top:95px" width="8" height="7" viewBox="0 0 8 7"><rect x="0" y="0.5" width="1" height="1" fill="#4d6a9a"/><rect x="0" y="3" width="1" height="1" fill="#4d6a9a"/><rect x="0" y="5.5" width="1" height="1" fill="#4d6a9a"/><rect x="2" y="0.7" width="6" height="0.6" fill="#6a6a6c"/><rect x="2" y="3.2" width="6" height="0.6" fill="#6a6a6c"/><rect x="2" y="5.7" width="6" height="0.6" fill="#6a6a6c"/></svg>
<div class="a" style="left:378px;top:97.6px;width:0;height:0;border-left:1.6px solid transparent;border-right:1.6px solid transparent;border-top:2px solid #777"></div>
<svg class="a" style="left:385px;top:95px" width="8" height="7" viewBox="0 0 8 7"><rect x="0" y="0.5" width="1" height="1" fill="#4d6a9a"/><rect x="0" y="3" width="1" height="1" fill="#4d6a9a"/><rect x="0" y="5.5" width="1" height="1" fill="#4d6a9a"/><rect x="2" y="0.7" width="6" height="0.6" fill="#6a6a6c"/><rect x="2" y="3.2" width="6" height="0.6" fill="#6a6a6c"/><rect x="2" y="5.7" width="6" height="0.6" fill="#6a6a6c"/></svg>
<div class="a" style="left:398.4px;top:97.6px;width:0;height:0;border-left:1.6px solid transparent;border-right:1.6px solid transparent;border-top:2px solid #777"></div>
<div class="a" style="left:406.6px;top:92.8px;width:30.1px;height:11px;background:#38383a;border-radius:1px;"></div>
<div class="a" style="left:421.5px;top:92.8px;width:0.6px;height:11px;background:#2c2c2e;border-radius:0px;"></div>
<svg class="a" style="left:409px;top:95px" width="10" height="7" viewBox="0 0 10 7"><path d="M0.5 3.5L3 2V5Z" fill="#4d6a9a"/><ellipse cx="3" cy="3.5" rx="2" ry="1.2" fill="#3c5fa8"/><rect x="5" y="1" width="5" height="0.6" fill="#6a6a6c"/><rect x="5" y="3.2" width="5" height="0.6" fill="#6a6a6c"/><rect x="5" y="5.4" width="5" height="0.6" fill="#6a6a6c"/></svg>
<svg class="a" style="left:424px;top:95px" width="10" height="7" viewBox="0 0 10 7"><ellipse cx="3" cy="3.5" rx="2" ry="1.2" fill="#3c5fa8"/><rect x="5" y="1" width="5" height="0.6" fill="#6a6a6c"/><rect x="5" y="3.2" width="5" height="0.6" fill="#6a6a6c"/><rect x="5" y="5.4" width="5" height="0.6" fill="#6a6a6c"/></svg>
<div class="a" style="left:440px;top:92.8px;width:18.4px;height:11px;background:#38383a;border-radius:1px;"></div>
<svg class="a" style="left:442px;top:95px" width="8" height="7" viewBox="0 0 8 7"><rect x="0" y="0.5" width="1" height="1" fill="#3c5fa8"/><rect x="0" y="3" width="1" height="1" fill="#3c5fa8"/><rect x="0" y="5.5" width="1" height="1" fill="#3c5fa8"/><rect x="2" y="0.7" width="6" height="0.6" fill="#6a6a6c"/><rect x="2" y="3.2" width="6" height="0.6" fill="#6a6a6c"/><rect x="2" y="5.7" width="6" height="0.6" fill="#6a6a6c"/></svg>
<div class="a" style="left:454px;top:97.6px;width:0;height:0;border-left:1.6px solid transparent;border-right:1.6px solid transparent;border-top:2px solid #777"></div>
<div class="a" style="left:462.5px;top:92.8px;width:17.8px;height:11px;background:#38383a;border-radius:1px;"></div>
<svg class="a" style="left:465px;top:94.5px" width="8" height="8" viewBox="0 0 8 8"><rect x="0" y="0" width="8" height="8" fill="#5e7060"/><path d="M2.7 0V8M5.3 0V8M0 2.7H8M0 5.3H8" stroke="#44504a" stroke-width="0.5"/></svg>
<div class="a" style="left:476px;top:97.6px;width:0;height:0;border-left:1.6px solid transparent;border-right:1.6px solid transparent;border-top:2px solid #777"></div>
<div class="a" style="left:362.8px;top:109px;width:61px;height:11px;background:#38383a;border-radius:1px;"></div>
<div class="a" style="left:378px;top:109px;width:0.6px;height:11px;background:#2c2c2e;border-radius:0px;"></div>
<div class="a" style="left:393.5px;top:109px;width:0.6px;height:11px;background:#2c2c2e;border-radius:0px;"></div>
<div class="a" style="left:409px;top:109px;width:0.6px;height:11px;background:#2c2c2e;border-radius:0px;"></div>
<div class="a" style="left:366px;top:111.5px;width:8px;height:6px;border-top:0.6px solid #5a5a5c;border-bottom:0.6px solid #5a5a5c"></div>
<div class="a" style="left:366px;top:114px;width:6px;height:0.6px;background:#5a5a5c;border-radius:0px;"></div>
<div class="a" style="left:381.5px;top:111.5px;width:8px;height:6px;border-top:0.6px solid #5a5a5c;border-bottom:0.6px solid #5a5a5c"></div>
<div class="a" style="left:382.5px;top:114px;width:6px;height:0.6px;background:#5a5a5c;border-radius:0px;"></div>
<div class="a" style="left:397px;top:111.5px;width:8px;height:6px;border-top:0.6px solid #5a5a5c;border-bottom:0.6px solid #5a5a5c"></div>
<div class="a" style="left:398px;top:114px;width:6px;height:0.6px;background:#5a5a5c;border-radius:0px;"></div>
<div class="a" style="left:412.5px;top:111.5px;width:8px;height:6px;border-top:0.6px solid #5a5a5c;border-bottom:0.6px solid #5a5a5c"></div>
<div class="a" style="left:412.5px;top:114px;width:6px;height:0.6px;background:#5a5a5c;border-radius:0px;"></div>
<div class="a" style="left:427px;top:109px;width:37.7px;height:11px;background:#38383a;border-radius:1px;"></div>
<div class="a" style="left:446px;top:109px;width:0.6px;height:11px;background:#2c2c2e;border-radius:0px;"></div>
<svg class="a" style="left:429px;top:110.5px" width="9" height="8" viewBox="0 0 9 8"><path d="M1 0V8M3.5 0V8M6 0V8" stroke="#5a5a5c" stroke-width="0.7"/><path d="M6 0L8 3" stroke="#4d6a9a" stroke-width="0.8"/></svg>
<div class="a" style="left:441px;top:113.8px;width:0;height:0;border-left:1.6px solid transparent;border-right:1.6px solid transparent;border-top:2px solid #777"></div>
<div class="a" style="left:449px;top:111px;width:8px;height:7px;background:#7a7a7c;border-radius:0px;"></div>
<div class="a" style="left:450px;top:112px;width:6px;height:2.5px;background:#9a9a9c;border-radius:0px;"></div>
<div class="a" style="left:460.5px;top:113.8px;width:0;height:0;border-left:1.6px solid transparent;border-right:1.6px solid transparent;border-top:2px solid #777"></div>
<svg class="a" style="left:490px;top:93.5px" width="14" height="12" viewBox="0 0 14 12"><path d="M0 3L4 0H9L5 3Z" fill="#2f5a3a"/><rect x="1" y="3" width="6" height="5" fill="#3a6a44"/><rect x="5" y="5" width="8.5" height="6.5" fill="#77777a"/></svg>
<div class="a" style="left:506.2px;top:97.6px;width:0;height:0;border-left:1.6px solid transparent;border-right:1.6px solid transparent;border-top:2px solid #666"></div>
<div class="t" style="left:483.8px;top:112.2px;font-size:6.16px;font-weight:normal;color:#8c8c8e">Convert to</div>
<div class="t" style="left:485.9px;top:118.4px;font-size:6.16px;font-weight:normal;color:#8c8c8e">SmartArt</div>
<div class="a" style="left:517.5px;top:91.5px;width:0.8px;height:31px;background:#3a3a3c;border-radius:0px;"></div>
<svg class="a" style="left:525.5px;top:93.5px" width="14" height="13" viewBox="0 0 14 13"><rect x="0" y="0" width="14" height="12.5" fill="#f4f4f4"/><path d="M0.8 11.8L5 6.5L8 9.5L10 8L13.2 11.8Z" fill="#5bb55e"/><circle cx="10.5" cy="3.3" r="1.6" fill="#f2c12e"/></svg>
<div class="a" style="left:542.5px;top:99.2px;width:0;height:0;border-left:1.6px solid transparent;border-right:1.6px solid transparent;border-top:2px solid #ddd"></div>
<div class="t" style="left:524.5px;top:112.1px;font-size:5.66px;font-weight:bold;color:#eeeeee">Picture</div>
<svg class="a" style="left:552px;top:92px" width="15" height="15" viewBox="0 0 15 15"><rect x="0.5" y="4" width="8" height="6.5" fill="#cfe3f7"/><circle cx="10" cy="4" r="3.5" fill="#e8f1fb"/><path d="M7 10L10.5 6.5L14 10L10.5 13.5Z" fill="#dce9f7"/></svg>
<div class="a" style="left:569.5px;top:99.2px;width:0;height:0;border-left:1.6px solid transparent;border-right:1.6px solid transparent;border-top:2px solid #ddd"></div>
<div class="t" style="left:551.7px;top:112.1px;font-size:5.48px;font-weight:bold;color:#eeeeee">Shapes</div>
<svg class="a" style="left:579.5px;top:93px" width="15" height="13" viewBox="0 0 15 13"><rect x="1" y="1" width="13" height="11" fill="#f4f4f4" stroke="#bdbdbd" stroke-width="0.5"/><text x="3" y="6.5" font-size="5.5" font-weight="bold" fill="#333" font-family="Liberation Sans">A</text><rect x="7.5" y="3" width="5" height="0.8" fill="#777"/><rect x="7.5" y="5" width="5" height="0.8" fill="#777"/><rect x="3" y="7.5" width="9.5" height="0.8" fill="#777"/><rect x="3" y="9.5" width="9.5" height="0.8" fill="#777"/><rect x="0" y="0" width="2" height="2" fill="#2a66c8"/><rect x="13" y="0" width="2" height="2" fill="#2a66c8"/><rect x="0" y="11" width="2" height="2" fill="#2a66c8"/><rect x="13" y="11" width="2" height="2" fill="#2a66c8"/></svg>
<div class="t" style="left:581.5px;top:112.1px;font-size:5.5px;font-weight:bold;color:#eeeeee">Text</div>
<div class="t" style="left:582.5px;top:118.4px;font-size:5.4px;font-weight:bold;color:#eeeeee">Box</div>
<div class="a" style="left:602px;top:91.5px;width:0.8px;height:31px;background:#3a3a3c;border-radius:0px;"></div>
<svg class="a" style="left:609.5px;top:92.5px" width="14" height="14" viewBox="0 0 14 14"><rect x="1.5" y="1.5" width="11" height="11" fill="#f6c243"/><rect x="0" y="0" width="3.5" height="3.5" fill="#fafafa"/><rect x="9.5" y="9.5" width="4" height="4" fill="#fafafa"/></svg>
<div class="a" style="left:626px;top:99.2px;width:0;height:0;border-left:1.6px solid transparent;border-right:1.6px solid transparent;border-top:2px solid #ddd"></div>
<div class="t" style="left:608px;top:112.1px;font-size:5.48px;font-weight:bold;color:#eeeeee">Arrange</div>
<svg class="a" style="left:636px;top:93px" width="16" height="14" viewBox="0 0 16 14"><rect x="0" y="0" width="12" height="12" rx="1" fill="#6a6a6c"/><path d="M6 11L14 2" stroke="#7a7a7c" stroke-width="2"/><path d="M2 12.5L5 10" stroke="#3e6fb8" stroke-width="1.2"/><circle cx="6" cy="12" r="1" fill="#c77a3a"/></svg>
<div class="a" style="left:654px;top:99.2px;width:0;height:0;border-left:1.6px solid transparent;border-right:1.6px solid transparent;border-top:2px solid #777"></div>
<div class="t" style="left:640px;top:112.2px;font-size:5.38px;font-weight:normal;color:#8c8c8e">Quick</div>
<div class="t" style="left:639px;top:118.4px;font-size:5.6px;font-weight:normal;color:#8c8c8e">Styles</div>
<svg class="a" style="left:665px;top:92.5px" width="7" height="8" viewBox="0 0 7 8"><path d="M3.5 0.5L6.5 3.5L3 7L0.5 4.5Z" fill="#4a5a78"/><path d="M1 4H6" stroke="#8a95b8" stroke-width="0.6"/></svg>
<div class="t" style="left:676.7px;top:96.4px;font-size:5.8px;font-weight:normal;color:#8c8c8e">Shape Fill</div>
<div class="a" style="left:706px;top:98px;width:0;height:0;border-left:1.6px solid transparent;border-right:1.6px solid transparent;border-top:2px solid #666"></div>
<svg class="a" style="left:664px;top:109px" width="8" height="8" viewBox="0 0 8 8"><path d="M1 7L7 1" stroke="#3c5a88" stroke-width="2"/><path d="M0.5 7.5L2 6" stroke="#5a7ab8" stroke-width="1"/></svg>
<div class="t" style="left:676.7px;top:112.4px;font-size:5.92px;font-weight:normal;color:#8c8c8e">Shape Outline</div>
<div class="a" style="left:718px;top:114px;width:0;height:0;border-left:1.6px solid transparent;border-right:1.6px solid transparent;border-top:2px solid #666"></div>

<!-- thumbnails -->
<div class="a" style="left:37.5px;top:125.5px;width:75.8px;height:1.8px;background:#fdfdfd;border-radius:0 0 1.6px 1.6px"></div>
<svg class="a" style="left:37.5px;top:137.7px" width="75.8" height="42.50" viewBox="0 0 75.8 42.50"><rect x="0" y="0" width="75.8" height="42.5" rx="1.6" fill="#fdfdfd"/><rect x="1.3" y="0.6" width="16" height="4.6" fill="#fff" stroke="#b8b8c8" stroke-width="0.35"/><rect x="2" y="1.3" width="2.6" height="3.3" fill="#4a6fc8"/><rect x="3.6" y="1.3" width="1.2" height="3.3" fill="#d8406a"/><rect x="6" y="1.8" width="9" height="1.4" fill="#c8a0c8"/><rect x="8" y="3.2" width="6" height="1" fill="#9a9a9a"/><circle cx="55.6" cy="2.4" r="1" fill="#7a5a3a"/><rect x="57" y="1.3" width="6" height="2.2" fill="#f08a3a"/><rect x="63.5" y="1.5" width="6" height="1.6" fill="#f7c8a0"/><text x="4.9" y="9.9" font-family="Liberation Sans" font-weight="bold" font-size="3.3" fill="#222" textLength="34" lengthAdjust="spacingAndGlyphs">In the making of destiny</text><rect x="5.5" y="13.50" width="38.00" height="0.5" fill="#b4b4b4"/><rect x="5.5" y="14.75" width="38.00" height="0.5" fill="#b4b4b4"/><rect x="5.5" y="16.00" width="28.50" height="0.5" fill="#b4b4b4"/><rect x="5.5" y="17.25" width="38.00" height="0.5" fill="#b4b4b4"/><rect x="5.5" y="18.50" width="38.00" height="0.5" fill="#b4b4b4"/><rect x="5.5" y="19.75" width="28.50" height="0.5" fill="#b4b4b4"/><rect x="5.5" y="21.00" width="38.00" height="0.5" fill="#b4b4b4"/><rect x="5.5" y="22.25" width="38.00" height="0.5" fill="#b4b4b4"/><rect x="5.5" y="23.50" width="28.50" height="0.5" fill="#b4b4b4"/><rect x="5.5" y="24.75" width="38.00" height="0.5" fill="#b4b4b4"/><rect x="5.5" y="26.00" width="38.00" height="0.5" fill="#b4b4b4"/><rect x="5.5" y="27.25" width="28.50" height="0.5" fill="#b4b4b4"/><rect x="5.5" y="28.50" width="38.00" height="0.5" fill="#b4b4b4"/><rect x="5.5" y="29.75" width="38.00" height="0.5" fill="#b4b4b4"/><rect x="5.5" y="31.00" width="28.50" height="0.5" fill="#b4b4b4"/><rect x="5.5" y="32.25" width="38.00" height="0.5" fill="#b4b4b4"/><rect x="5.5" y="33.50" width="38.00" height="0.5" fill="#b4b4b4"/><rect x="5.5" y="34.75" width="28.50" height="0.5" fill="#b4b4b4"/><rect x="5.5" y="36.00" width="38.00" height="0.5" fill="#b4b4b4"/><rect x="5.5" y="37.25" width="38.00" height="0.5" fill="#b4b4b4"/><rect x="46.2" y="13.2" width="28.7" height="26" fill="#b8bcc0"/><rect x="46.2" y="13.2" width="28.7" height="17" fill="#3f6f98"/><path d="M47 19Q55 15 62 18T74 16" stroke="#d8e8f0" stroke-width="1.4" fill="none"/><path d="M48 24Q56 21 63 24T74 22" stroke="#c8dce8" stroke-width="1.1" fill="none"/><rect x="46.2" y="28" width="28.7" height="3" fill="#6a8a8a"/><path d="M47 33L52 31L58 34L64 31L70 34L74.9 32V39.2H46.2Z" fill="#d0d0cc"/></svg>
<div class="t" style="left:26.3px;top:138.7px;font-size:7.6px;color:#e8e8e8">4</div>
<svg class="a" style="left:37.5px;top:190.2px" width="75.8" height="42.50" viewBox="0 0 75.8 42.50"><rect x="0" y="0" width="75.8" height="42.5" rx="1.6" fill="#fdfdfd"/><rect x="1.3" y="0.6" width="16" height="4.6" fill="#fff" stroke="#b8b8c8" stroke-width="0.35"/><rect x="2" y="1.3" width="2.6" height="3.3" fill="#4a6fc8"/><rect x="3.6" y="1.3" width="1.2" height="3.3" fill="#d8406a"/><rect x="6" y="1.8" width="9" height="1.4" fill="#c8a0c8"/><rect x="8" y="3.2" width="6" height="1" fill="#9a9a9a"/><circle cx="55.6" cy="2.4" r="1" fill="#7a5a3a"/><rect x="57" y="1.3" width="6" height="2.2" fill="#f08a3a"/><rect x="63.5" y="1.5" width="6" height="1.6" fill="#f7c8a0"/><text x="4.5" y="7.6" font-family="Liberation Sans" font-weight="bold" font-size="3.6" fill="#222" textLength="21.5" lengthAdjust="spacingAndGlyphs">Survey (n=150)</text><path d="M11.7 15.3L11.70 10.30A5 5 0 1 1 10.15 20.06Z" fill="#e8342a"/><path d="M11.7 15.3L10.15 20.06A5 5 0 0 1 11.70 10.30Z" fill="#2a66c8"/><path d="M11.7 29.5L11.70 23.00A6.5 6.5 0 0 1 16.96 25.68Z" fill="#e8342a"/><path d="M11.7 29.5L16.96 25.68A6.5 6.5 0 0 1 18.15 30.31Z" fill="#2a66c8"/><path d="M11.7 29.5L18.15 30.31A6.5 6.5 0 0 1 15.84 34.51Z" fill="#29a84a"/><path d="M11.7 29.5L15.84 34.51A6.5 6.5 0 0 1 12.11 35.99Z" fill="#f29a2a"/><path d="M11.7 29.5L12.11 35.99A6.5 6.5 0 0 1 7.56 34.51Z" fill="#d83aa0"/><path d="M11.7 29.5L7.56 34.51A6.5 6.5 0 0 1 5.40 31.12Z" fill="#5ac8e8"/><path d="M11.7 29.5L5.40 31.12A6.5 6.5 0 0 1 6.69 25.36Z" fill="#9a4ac8"/><path d="M11.7 29.5L6.69 25.36A6.5 6.5 0 0 1 11.70 23.00Z" fill="#e8d42a"/><path d="M33 13.2H40M33 23.3H52M33 33.9H45.6M52 22.7V33.9M45 33.9H60" stroke="#555" stroke-width="0.4" fill="none"/><path d="M29.7 13.2L29.70 10.20A3 3 0 0 1 31.46 15.63Z" fill="#2a66c8"/><path d="M29.7 13.2L31.46 15.63A3 3 0 0 1 26.70 13.20Z" fill="#e8342a"/><path d="M29.7 13.2L26.70 13.20A3 3 0 0 1 29.70 10.20Z" fill="#f29a2a"/><path d="M44.1 13.2L44.10 10.20A3 3 0 1 1 41.25 14.13Z" fill="#e8342a"/><path d="M44.1 13.2L41.25 14.13A3 3 0 0 1 44.10 10.20Z" fill="#29a84a"/><path d="M29.3 23.3L29.30 20.30A3 3 0 1 1 26.45 22.37Z" fill="#e8342a"/><path d="M29.3 23.3L26.45 22.37A3 3 0 0 1 29.30 20.30Z" fill="#f29a2a"/><path d="M29.3 33.9L29.30 30.90A3 3 0 1 1 26.30 33.90Z" fill="#e8342a"/><path d="M29.3 33.9L26.30 33.90A3 3 0 0 1 29.30 30.90Z" fill="#2a66c8"/><path d="M45.6 33.9L45.60 30.90A3 3 0 1 1 43.17 35.66Z" fill="#e8342a"/><path d="M45.6 33.9L43.17 35.66A3 3 0 0 1 45.60 30.90Z" fill="#2a66c8"/><path d="M60.7 33.9L60.70 30.90A3 3 0 1 1 58.94 36.33Z" fill="#e8342a"/><path d="M60.7 33.9L58.94 36.33A3 3 0 0 1 60.70 30.90Z" fill="#2a66c8"/><path d="M56.2 22.7L56.20 16.40A6.3 6.3 0 1 1 50.21 24.65Z" fill="#2a9ad8"/><path d="M56.2 22.7L50.21 24.65A6.3 6.3 0 0 1 53.16 17.18Z" fill="#f29a2a"/><path d="M56.2 22.7L53.16 17.18A6.3 6.3 0 0 1 56.20 16.40Z" fill="#29a84a"/><rect x="63" y="26.00" width="8.00" height="0.5" fill="#aaa"/><rect x="63" y="27.30" width="8.00" height="0.5" fill="#aaa"/><rect x="63" y="28.60" width="6.00" height="0.5" fill="#aaa"/><rect x="63" y="29.90" width="8.00" height="0.5" fill="#aaa"/><rect x="63" y="31.20" width="8.00" height="0.5" fill="#aaa"/><rect x="62" y="13" width="9" height="1" fill="#333" opacity="0.72"/><rect x="17" y="14.00" width="3.00" height="0.5" fill="#c0c0c0"/><rect x="17" y="15.20" width="3.00" height="0.5" fill="#c0c0c0"/><rect x="17" y="16.40" width="2.25" height="0.5" fill="#c0c0c0"/><rect x="17" y="17.60" width="3.00" height="0.5" fill="#c0c0c0"/><rect x="17" y="18.80" width="3.00" height="0.5" fill="#c0c0c0"/><rect x="17" y="20.00" width="2.25" height="0.5" fill="#c0c0c0"/><rect x="33" y="11.00" width="5.00" height="0.5" fill="#c0c0c0"/><rect x="33" y="12.10" width="5.00" height="0.5" fill="#c0c0c0"/><rect x="33" y="13.20" width="3.75" height="0.5" fill="#c0c0c0"/><rect x="33" y="14.30" width="5.00" height="0.5" fill="#c0c0c0"/></svg>
<div class="t" style="left:26.3px;top:191.2px;font-size:7.6px;color:#e8e8e8">5</div>
<svg class="a" style="left:37.5px;top:242.8px" width="75.8" height="42.50" viewBox="0 0 75.8 42.50"><rect x="0" y="0" width="75.8" height="42.5" rx="1.6" fill="#fdfdfd"/><rect x="1.3" y="0.6" width="16" height="4.6" fill="#fff" stroke="#b8b8c8" stroke-width="0.35"/><rect x="2" y="1.3" width="2.6" height="3.3" fill="#4a6fc8"/><rect x="3.6" y="1.3" width="1.2" height="3.3" fill="#d8406a"/><rect x="6" y="1.8" width="9" height="1.4" fill="#c8a0c8"/><rect x="8" y="3.2" width="6" height="1" fill="#9a9a9a"/><circle cx="55.6" cy="2.4" r="1" fill="#7a5a3a"/><rect x="57" y="1.3" width="6" height="2.2" fill="#f08a3a"/><rect x="63.5" y="1.5" width="6" height="1.6" fill="#f7c8a0"/><rect x="5.9" y="5.9" width="24.3" height="18.2" fill="#6a6a66"/><rect x="5.9" y="5.9" width="24.3" height="6" fill="#b8bcc0"/><path d="M12 24.1L24 12H30.2V24.1Z" fill="#9a8a70"/><rect x="5.9" y="25.3" width="24.3" height="16.5" fill="#8aa8c0"/><path d="M5.9 41.8L30.2 30V41.8Z" fill="#d8dcde"/><rect x="22" y="30" width="2" height="6" fill="#333"/><text x="34.5" y="10.8" font-family="Liberation Sans" font-weight="bold" font-size="3.8" fill="#222" textLength="23.7" lengthAdjust="spacingAndGlyphs">Existing Strategy</text><rect x="36" y="17.50" width="30.00" height="0.5" fill="#b8b8b8"/><rect x="36" y="18.70" width="30.00" height="0.5" fill="#b8b8b8"/><rect x="36" y="19.90" width="22.50" height="0.5" fill="#b8b8b8"/><rect x="36" y="25.3" width="34.5" height="0.3" fill="#aaa"/><rect x="38.00" y="24.50" width="3.2" height="0.8" fill="#4f7fd0"/><rect x="44.50" y="23.80" width="3.2" height="1.5" fill="#4f7fd0"/><rect x="51.00" y="19.30" width="3.2" height="6" fill="#4f7fd0"/><rect x="57.50" y="21.80" width="3.2" height="3.5" fill="#4f7fd0"/><rect x="64.00" y="21.80" width="3.2" height="3.5" fill="#4f7fd0"/><rect x="36" y="28.00" width="30.00" height="0.5" fill="#b8b8b8"/><rect x="36" y="29.20" width="30.00" height="0.5" fill="#b8b8b8"/><rect x="36" y="38.1" width="34.5" height="0.3" fill="#aaa"/><rect x="38.00" y="36.30" width="3.2" height="1.8" fill="#4f7fd0"/><rect x="44.50" y="35.10" width="3.2" height="3" fill="#4f7fd0"/><rect x="51.00" y="30.60" width="3.2" height="7.5" fill="#4f7fd0"/><rect x="57.50" y="33.50" width="3.2" height="4.6" fill="#4f7fd0"/><rect x="64.00" y="33.90" width="3.2" height="4.2" fill="#4f7fd0"/></svg>
<div class="t" style="left:26.3px;top:243.8px;font-size:7.6px;color:#e8e8e8">6</div>
<svg class="a" style="left:37.5px;top:295.3px" width="75.8" height="42.50" viewBox="0 0 75.8 42.50"><rect x="0" y="0" width="75.8" height="42.5" rx="1.6" fill="#fdfdfd"/><rect x="1.3" y="0.6" width="16" height="4.6" fill="#fff" stroke="#b8b8c8" stroke-width="0.35"/><rect x="2" y="1.3" width="2.6" height="3.3" fill="#4a6fc8"/><rect x="3.6" y="1.3" width="1.2" height="3.3" fill="#d8406a"/><rect x="6" y="1.8" width="9" height="1.4" fill="#c8a0c8"/><rect x="8" y="3.2" width="6" height="1" fill="#9a9a9a"/><circle cx="55.6" cy="2.4" r="1" fill="#7a5a3a"/><rect x="57" y="1.3" width="6" height="2.2" fill="#f08a3a"/><rect x="63.5" y="1.5" width="6" height="1.6" fill="#f7c8a0"/><text x="5.5" y="10.8" font-family="Liberation Sans" font-weight="bold" font-size="3.8" fill="#222" textLength="35.5" lengthAdjust="spacingAndGlyphs">Accommodating Strategy</text><rect x="6" y="12.50" width="29.00" height="0.5" fill="#b4b4b4"/><rect x="6" y="13.90" width="29.00" height="0.5" fill="#b4b4b4"/><rect x="6" y="15.30" width="21.75" height="0.5" fill="#b4b4b4"/><rect x="6" y="16.70" width="29.00" height="0.5" fill="#b4b4b4"/><rect x="6" y="18.10" width="29.00" height="0.5" fill="#b4b4b4"/><rect x="6" y="19.50" width="21.75" height="0.5" fill="#b4b4b4"/><rect x="6" y="20.90" width="29.00" height="0.5" fill="#b4b4b4"/><rect x="44.4" y="8.5" width="12.8" height="12.6" fill="#6a7a4a"/><rect x="44.4" y="8.5" width="12.8" height="4" fill="#a8c0d8"/><rect x="58.2" y="8.5" width="13.8" height="12.6" fill="#7a5a48"/><rect x="60" y="10" width="6" height="8" fill="#a88a70"/><rect x="1.4" y="22.7" width="14.4" height="10.8" fill="#8a8f94"/><rect x="1.4" y="22.7" width="14.4" height="4" fill="#c8d0d8"/><rect x="16.8" y="22.7" width="22.7" height="15.6" fill="#3a3a36"/><rect x="22" y="25" width="10" height="6" fill="#7a7a70"/><rect x="44" y="23.00" width="28.00" height="0.5" fill="#b8b8b8"/><rect x="44" y="24.20" width="28.00" height="0.5" fill="#b8b8b8"/><rect x="46" y="37.1" width="30.0" height="0.3" fill="#aaa"/><rect x="48.00" y="34.60" width="3.2" height="2.5" fill="#4f7fd0"/><rect x="53.60" y="33.80" width="3.2" height="3.3" fill="#4f7fd0"/><rect x="59.20" y="30.10" width="3.2" height="7" fill="#4f7fd0"/><rect x="64.80" y="32.30" width="3.2" height="4.8" fill="#4f7fd0"/><rect x="70.40" y="29.60" width="3.2" height="7.5" fill="#4f7fd0"/></svg>
<div class="t" style="left:26.3px;top:296.3px;font-size:7.6px;color:#e8e8e8">7</div>
<svg class="a" style="left:37.5px;top:347.8px" width="75.8" height="42.50" viewBox="0 0 75.8 42.50"><rect x="0" y="0" width="75.8" height="42.5" rx="1.6" fill="#fdfdfd"/><rect x="1.3" y="0.6" width="16" height="4.6" fill="#fff" stroke="#b8b8c8" stroke-width="0.35"/><rect x="2" y="1.3" width="2.6" height="3.3" fill="#4a6fc8"/><rect x="3.6" y="1.3" width="1.2" height="3.3" fill="#d8406a"/><rect x="6" y="1.8" width="9" height="1.4" fill="#c8a0c8"/><rect x="8" y="3.2" width="6" height="1" fill="#9a9a9a"/><circle cx="55.6" cy="2.4" r="1" fill="#7a5a3a"/><rect x="57" y="1.3" width="6" height="2.2" fill="#f08a3a"/><rect x="63.5" y="1.5" width="6" height="1.6" fill="#f7c8a0"/><text x="5.4" y="10.9" font-family="Liberation Sans" font-weight="bold" font-size="3.8" fill="#222" textLength="23.9" lengthAdjust="spacingAndGlyphs">Relocation Strategy</text><rect x="5.5" y="14.00" width="27.00" height="0.5" fill="#b4b4b4"/><rect x="5.5" y="16.10" width="27.00" height="0.5" fill="#b4b4b4"/><rect x="5.5" y="18.20" width="20.25" height="0.5" fill="#b4b4b4"/><rect x="5.5" y="20.30" width="27.00" height="0.5" fill="#b4b4b4"/><rect x="5.5" y="22.40" width="27.00" height="0.5" fill="#b4b4b4"/><rect x="5.5" y="24.50" width="20.25" height="0.5" fill="#b4b4b4"/><rect x="5.5" y="26.60" width="27.00" height="0.5" fill="#b4b4b4"/><rect x="5.5" y="28.70" width="27.00" height="0.5" fill="#b4b4b4"/><rect x="5.5" y="30.80" width="20.25" height="0.5" fill="#b4b4b4"/><rect x="5.5" y="32.90" width="27.00" height="0.5" fill="#b4b4b4"/><rect x="36.7" y="5.4" width="33.4" height="18.5" fill="#3a3430"/><path d="M36.7 9L52 5.4L70.1 9V11H36.7Z" fill="#4a4a48"/><rect x="40" y="14" width="28" height="7" fill="#5a2a2a"/><rect x="44" y="15" width="2" height="5" fill="#c83a3a"/><rect x="58" y="15" width="2" height="5" fill="#c83a3a"/><rect x="37" y="25.00" width="33.00" height="0.5" fill="#b8b8b8"/><rect x="37" y="26.20" width="33.00" height="0.5" fill="#b8b8b8"/><rect x="37" y="27.40" width="24.75" height="0.5" fill="#b8b8b8"/><rect x="38" y="37.9" width="37" height="0.3" fill="#aaa"/><rect x="40.00" y="35.70" width="3.8" height="2.2" fill="#4f7fd0"/><rect x="47.00" y="35.70" width="3.8" height="2.2" fill="#4f7fd0"/><rect x="54.00" y="32.40" width="3.8" height="5.5" fill="#4f7fd0"/><rect x="61.00" y="33.30" width="3.8" height="4.6" fill="#4f7fd0"/><rect x="68.00" y="29.90" width="3.8" height="8" fill="#4f7fd0"/></svg>
<div class="t" style="left:26.3px;top:348.8px;font-size:7.6px;color:#e8e8e8">8</div>
<svg class="a" style="left:37.5px;top:400.3px" width="75.8" height="42.50" viewBox="0 0 75.8 42.50"><rect x="0" y="0" width="75.8" height="42.5" rx="1.6" fill="#fdfdfd"/><rect x="1.3" y="0.6" width="16" height="4.6" fill="#fff" stroke="#b8b8c8" stroke-width="0.35"/><rect x="2" y="1.3" width="2.6" height="3.3" fill="#4a6fc8"/><rect x="3.6" y="1.3" width="1.2" height="3.3" fill="#d8406a"/><rect x="6" y="1.8" width="9" height="1.4" fill="#c8a0c8"/><rect x="8" y="3.2" width="6" height="1" fill="#9a9a9a"/><circle cx="55.6" cy="2.4" r="1" fill="#7a5a3a"/><rect x="57" y="1.3" width="6" height="2.2" fill="#f08a3a"/><rect x="63.5" y="1.5" width="6" height="1.6" fill="#f7c8a0"/><text x="5.4" y="10.5" font-family="Liberation Sans" font-weight="bold" font-size="3.8" fill="#222" textLength="23.9" lengthAdjust="spacingAndGlyphs">Floating Strategy</text><rect x="5.5" y="13.00" width="31.00" height="0.5" fill="#b4b4b4"/><rect x="5.5" y="14.30" width="31.00" height="0.5" fill="#b4b4b4"/><rect x="5.5" y="15.60" width="23.25" height="0.5" fill="#b4b4b4"/><rect x="5.5" y="16.90" width="31.00" height="0.5" fill="#b4b4b4"/><rect x="5.5" y="18.20" width="31.00" height="0.5" fill="#b4b4b4"/><rect x="5.5" y="19.50" width="23.25" height="0.5" fill="#b4b4b4"/><rect x="5.5" y="20.80" width="31.00" height="0.5" fill="#b4b4b4"/><rect x="5.5" y="22.10" width="31.00" height="0.5" fill="#b4b4b4"/><rect x="5.5" y="23.40" width="23.25" height="0.5" fill="#b4b4b4"/><rect x="5.5" y="24.70" width="31.00" height="0.5" fill="#b4b4b4"/><rect x="5.5" y="26.00" width="31.00" height="0.5" fill="#b4b4b4"/><rect x="5.5" y="27.30" width="23.25" height="0.5" fill="#b4b4b4"/><rect x="5.5" y="28.60" width="31.00" height="0.5" fill="#b4b4b4"/><rect x="5.5" y="29.90" width="31.00" height="0.5" fill="#b4b4b4"/><rect x="5.5" y="31.20" width="23.25" height="0.5" fill="#b4b4b4"/><rect x="5.5" y="32.50" width="31.00" height="0.5" fill="#b4b4b4"/><rect x="5.5" y="33.80" width="31.00" height="0.5" fill="#b4b4b4"/><rect x="5.5" y="35.10" width="23.25" height="0.5" fill="#b4b4b4"/><rect x="5.5" y="36.40" width="31.00" height="0.5" fill="#b4b4b4"/><rect x="5.5" y="37.70" width="31.00" height="0.5" fill="#b4b4b4"/><rect x="39.3" y="8.6" width="21.5" height="13.9" fill="#4a7aa0"/><ellipse cx="50" cy="15.5" rx="8" ry="4" fill="#c8d4dc"/><ellipse cx="50" cy="15.5" rx="5" ry="2.5" fill="#7a8a94"/><rect x="61" y="4.6" width="13.1" height="18.9" fill="#e8e0d8"/><path d="M61 14L68 8L74.1 12V23.5H61Z" fill="#8a3a2a"/><rect x="61" y="19" width="13.1" height="4.5" fill="#a8b8c0"/><rect x="44" y="24.00" width="28.00" height="0.5" fill="#b8b8b8"/><rect x="44" y="25.20" width="28.00" height="0.5" fill="#b8b8b8"/><rect x="44" y="26.40" width="21.00" height="0.5" fill="#b8b8b8"/><rect x="43" y="36.5" width="30.0" height="0.3" fill="#aaa"/><rect x="45.00" y="30.50" width="3.2" height="6" fill="#4f7fd0"/><rect x="50.60" y="33.00" width="3.2" height="3.5" fill="#4f7fd0"/><rect x="56.20" y="31.00" width="3.2" height="5.5" fill="#4f7fd0"/><rect x="61.80" y="34.70" width="3.2" height="1.8" fill="#4f7fd0"/><rect x="67.40" y="34.80" width="3.2" height="1.7" fill="#4f7fd0"/></svg>
<div class="t" style="left:26.3px;top:401.3px;font-size:7.6px;color:#e8e8e8">9</div>
<svg class="a" style="left:37.5px;top:452.8px" width="75.8" height="36.90" viewBox="0 0 75.8 36.90"><rect x="0" y="0" width="75.8" height="42.5" rx="1.6" fill="#fdfdfd"/><rect x="1.3" y="0.6" width="16" height="4.6" fill="#fff" stroke="#b8b8c8" stroke-width="0.35"/><rect x="2" y="1.3" width="2.6" height="3.3" fill="#4a6fc8"/><rect x="3.6" y="1.3" width="1.2" height="3.3" fill="#d8406a"/><rect x="6" y="1.8" width="9" height="1.4" fill="#c8a0c8"/><rect x="8" y="3.2" width="6" height="1" fill="#9a9a9a"/><circle cx="55.6" cy="2.4" r="1" fill="#7a5a3a"/><rect x="57" y="1.3" width="6" height="2.2" fill="#f08a3a"/><rect x="63.5" y="1.5" width="6" height="1.6" fill="#f7c8a0"/><text x="6.6" y="8.8" font-family="Liberation Sans" font-weight="bold" font-size="3.4" fill="#222" textLength="37" lengthAdjust="spacingAndGlyphs">North Jakarta&#8217;s Attitude on</text><text x="6.6" y="12.9" font-family="Liberation Sans" font-weight="bold" font-size="3.4" fill="#222" textLength="32" lengthAdjust="spacingAndGlyphs">Living on the top of Water</text><rect x="7" y="14.20" width="17.00" height="0.5" fill="#b4b4b4"/><rect x="28" y="14.20" width="17.00" height="0.5" fill="#b4b4b4"/><path d="M11.6 22.9L11.60 18.70A4.2 4.2 0 0 1 11.60 27.10Z" fill="#e8342a"/><path d="M11.6 22.9L11.60 27.10A4.2 4.2 0 0 1 7.61 24.20Z" fill="#f2a42a"/><path d="M11.6 22.9L7.61 24.20A4.2 4.2 0 0 1 11.60 18.70Z" fill="#2a66c8"/><path d="M33.8 22.9L33.80 18.70A4.2 4.2 0 0 1 35.10 26.89Z" fill="#e8342a"/><path d="M33.8 22.9L35.10 26.89A4.2 4.2 0 1 1 33.80 18.70Z" fill="#2a66c8"/><rect x="17" y="21.00" width="4.00" height="0.5" fill="#c0c0c0"/><rect x="17" y="22.20" width="4.00" height="0.5" fill="#c0c0c0"/><rect x="17" y="23.40" width="3.00" height="0.5" fill="#c0c0c0"/><rect x="17" y="24.60" width="4.00" height="0.5" fill="#c0c0c0"/><rect x="7" y="28.00" width="20.00" height="0.5" fill="#b8b8b8"/><rect x="7" y="29.10" width="20.00" height="0.5" fill="#b8b8b8"/><rect x="28" y="28.00" width="20.00" height="0.5" fill="#b8b8b8"/><rect x="28" y="29.10" width="20.00" height="0.5" fill="#b8b8b8"/><circle cx="16.6" cy="34.8" r="4.2" fill="#e8342a"/><path d="M33.8 34.8L33.80 30.60A4.2 4.2 0 1 1 31.33 38.20Z" fill="#e8342a"/><path d="M33.8 34.8L31.33 38.20A4.2 4.2 0 0 1 33.80 30.60Z" fill="#2a66c8"/><rect x="49.8" y="6.3" width="24.4" height="17.7" fill="#7a4040"/><rect x="49.8" y="6.3" width="24.4" height="3" fill="#a8a8a8"/><rect x="58" y="10" width="12" height="7" fill="#c89a9a"/><rect x="52" y="11" width="4" height="5" fill="#d8d0d0"/><rect x="49.8" y="19" width="24.4" height="5" fill="#5a5048"/><rect x="49.8" y="24.6" width="24.4" height="17.9" fill="#c8d0d8"/><path d="M49.8 42.5V36L56 33L62 37L66 35L74.2 38V42.5Z" fill="#3a3430"/><circle cx="57" cy="34" r="1.5" fill="#2a2a2a"/><circle cx="67" cy="36" r="1.3" fill="#c87a5a"/></svg>
<div class="t" style="left:24.8px;top:453.8px;font-size:7.6px;color:#e8e8e8">10</div>

<!-- rulers -->
<svg class="a" style="left:126px;top:125.5px" width="666" height="9" viewBox="0 0 666 9"><rect x="84.32" y="6.3" width="0.7" height="1.7" fill="#8a8a8c"/><rect x="88.11" y="5" width="0.7" height="3" fill="#9a9a9c"/><rect x="91.90" y="6.3" width="0.7" height="1.7" fill="#8a8a8c"/><text x="96.04" y="4.8" font-size="5.2" fill="#c8c8ca" text-anchor="middle" font-family="Liberation Sans">16</text><rect x="99.48" y="6.3" width="0.7" height="1.7" fill="#8a8a8c"/><rect x="103.27" y="5" width="0.7" height="3" fill="#9a9a9c"/><rect x="107.06" y="6.3" width="0.7" height="1.7" fill="#8a8a8c"/><text x="111.20" y="4.8" font-size="5.2" fill="#c8c8ca" text-anchor="middle" font-family="Liberation Sans">15</text><rect x="114.64" y="6.3" width="0.7" height="1.7" fill="#8a8a8c"/><rect x="118.43" y="5" width="0.7" height="3" fill="#9a9a9c"/><rect x="122.22" y="6.3" width="0.7" height="1.7" fill="#8a8a8c"/><text x="126.36" y="4.8" font-size="5.2" fill="#c8c8ca" text-anchor="middle" font-family="Liberation Sans">14</text><rect x="129.80" y="6.3" width="0.7" height="1.7" fill="#8a8a8c"/><rect x="133.59" y="5" width="0.7" height="3" fill="#9a9a9c"/><rect x="137.38" y="6.3" width="0.7" height="1.7" fill="#8a8a8c"/><text x="141.52" y="4.8" font-size="5.2" fill="#c8c8ca" text-anchor="middle" font-family="Liberation Sans">13</text><rect x="144.96" y="6.3" width="0.7" height="1.7" fill="#8a8a8c"/><rect x="148.75" y="5" width="0.7" height="3" fill="#9a9a9c"/><rect x="152.54" y="6.3" width="0.7" height="1.7" fill="#8a8a8c"/><text x="156.68" y="4.8" font-size="5.2" fill="#c8c8ca" text-anchor="middle" font-family="Liberation Sans">12</text><rect x="160.12" y="6.3" width="0.7" height="1.7" fill="#8a8a8c"/><rect x="163.91" y="5" width="0.7" height="3" fill="#9a9a9c"/><rect x="167.70" y="6.3" width="0.7" height="1.7" fill="#8a8a8c"/><text x="171.84" y="4.8" font-size="5.2" fill="#c8c8ca" text-anchor="middle" font-family="Liberation Sans">11</text><rect x="175.28" y="6.3" width="0.7" height="1.7" fill="#8a8a8c"/><rect x="179.07" y="5" width="0.7" height="3" fill="#9a9a9c"/><rect x="182.86" y="6.3" width="0.7" height="1.7" fill="#8a8a8c"/><text x="187.00" y="4.8" font-size="5.2" fill="#c8c8ca" text-anchor="middle" font-family="Liberation Sans">10</text><rect x="190.44" y="6.3" width="0.7" height="1.7" fill="#8a8a8c"/><rect x="194.23" y="5" width="0.7" height="3" fill="#9a9a9c"/><rect x="198.02" y="6.3" width="0.7" height="1.7" fill="#8a8a8c"/><text x="202.16" y="4.8" font-size="5.2" fill="#c8c8ca" text-anchor="middle" font-family="Liberation Sans">9</text><rect x="205.60" y="6.3" width="0.7" height="1.7" fill="#8a8a8c"/><rect x="209.39" y="5" width="0.7" height="3" fill="#9a9a9c"/><rect x="213.18" y="6.3" width="0.7" height="1.7" fill="#8a8a8c"/><text x="217.32" y="4.8" font-size="5.2" fill="#c8c8ca" text-anchor="middle" font-family="Liberation Sans">8</text><rect x="220.76" y="6.3" width="0.7" height="1.7" fill="#8a8a8c"/><rect x="224.55" y="5" width="0.7" height="3" fill="#9a9a9c"/><rect x="228.34" y="6.3" width="0.7" height="1.7" fill="#8a8a8c"/><text x="232.48" y="4.8" font-size="5.2" fill="#c8c8ca" text-anchor="middle" font-family="Liberation Sans">7</text><rect x="235.92" y="6.3" width="0.7" height="1.7" fill="#8a8a8c"/><rect x="239.71" y="5" width="0.7" height="3" fill="#9a9a9c"/><rect x="243.50" y="6.3" width="0.7" height="1.7" fill="#8a8a8c"/><text x="247.64" y="4.8" font-size="5.2" fill="#c8c8ca" text-anchor="middle" font-family="Liberation Sans">6</text><rect x="251.08" y="6.3" width="0.7" height="1.7" fill="#8a8a8c"/><rect x="254.87" y="5" width="0.7" height="3" fill="#9a9a9c"/><rect x="258.66" y="6.3" width="0.7" height="1.7" fill="#8a8a8c"/><text x="262.80" y="4.8" font-size="5.2" fill="#c8c8ca" text-anchor="middle" font-family="Liberation Sans">5</text><rect x="266.24" y="6.3" width="0.7" height="1.7" fill="#8a8a8c"/><rect x="270.03" y="5" width="0.7" height="3" fill="#9a9a9c"/><rect x="273.82" y="6.3" width="0.7" height="1.7" fill="#8a8a8c"/><text x="277.96" y="4.8" font-size="5.2" fill="#c8c8ca" text-anchor="middle" font-family="Liberation Sans">4</text><rect x="281.40" y="6.3" width="0.7" height="1.7" fill="#8a8a8c"/><rect x="285.19" y="5" width="0.7" height="3" fill="#9a9a9c"/><rect x="288.98" y="6.3" width="0.7" height="1.7" fill="#8a8a8c"/><text x="293.12" y="4.8" font-size="5.2" fill="#c8c8ca" text-anchor="middle" font-family="Liberation Sans">3</text><rect x="296.56" y="6.3" width="0.7" height="1.7" fill="#8a8a8c"/><rect x="300.35" y="5" width="0.7" height="3" fill="#9a9a9c"/><rect x="304.14" y="6.3" width="0.7" height="1.7" fill="#8a8a8c"/><text x="308.28" y="4.8" font-size="5.2" fill="#c8c8ca" text-anchor="middle" font-family="Liberation Sans">2</text><rect x="311.72" y="6.3" width="0.7" height="1.7" fill="#8a8a8c"/><rect x="315.51" y="5" width="0.7" height="3" fill="#9a9a9c"/><rect x="319.30" y="6.3" width="0.7" height="1.7" fill="#8a8a8c"/><text x="323.44" y="4.8" font-size="5.2" fill="#c8c8ca" text-anchor="middle" font-family="Liberation Sans">1</text><rect x="326.88" y="6.3" width="0.7" height="1.7" fill="#8a8a8c"/><rect x="330.67" y="5" width="0.7" height="3" fill="#9a9a9c"/><rect x="334.46" y="6.3" width="0.7" height="1.7" fill="#8a8a8c"/><text x="338.60" y="4.8" font-size="5.2" fill="#c8c8ca" text-anchor="middle" font-family="Liberation Sans">0</text><rect x="342.04" y="6.3" width="0.7" height="1.7" fill="#8a8a8c"/><rect x="345.83" y="5" width="0.7" height="3" fill="#9a9a9c"/><rect x="349.62" y="6.3" width="0.7" height="1.7" fill="#8a8a8c"/><text x="353.76" y="4.8" font-size="5.2" fill="#c8c8ca" text-anchor="middle" font-family="Liberation Sans">1</text><rect x="357.20" y="6.3" width="0.7" height="1.7" fill="#8a8a8c"/><rect x="360.99" y="5" width="0.7" height="3" fill="#9a9a9c"/><rect x="364.78" y="6.3" width="0.7" height="1.7" fill="#8a8a8c"/><text x="368.92" y="4.8" font-size="5.2" fill="#c8c8ca" text-anchor="middle" font-family="Liberation Sans">2</text><rect x="372.36" y="6.3" width="0.7" height="1.7" fill="#8a8a8c"/><rect x="376.15" y="5" width="0.7" height="3" fill="#9a9a9c"/><rect x="379.94" y="6.3" width="0.7" height="1.7" fill="#8a8a8c"/><text x="384.08" y="4.8" font-size="5.2" fill="#c8c8ca" text-anchor="middle" font-family="Liberation Sans">3</text><rect x="387.52" y="6.3" width="0.7" height="1.7" fill="#8a8a8c"/><rect x="391.31" y="5" width="0.7" height="3" fill="#9a9a9c"/><rect x="395.10" y="6.3" width="0.7" height="1.7" fill="#8a8a8c"/><text x="399.24" y="4.8" font-size="5.2" fill="#c8c8ca" text-anchor="middle" font-family="Liberation Sans">4</text><rect x="402.68" y="6.3" width="0.7" height="1.7" fill="#8a8a8c"/><rect x="406.47" y="5" width="0.7" height="3" fill="#9a9a9c"/><rect x="410.26" y="6.3" width="0.7" height="1.7" fill="#8a8a8c"/><text x="414.40" y="4.8" font-size="5.2" fill="#c8c8ca" text-anchor="middle" font-family="Liberation Sans">5</text><rect x="417.84" y="6.3" width="0.7" height="1.7" fill="#8a8a8c"/><rect x="421.63" y="5" width="0.7" height="3" fill="#9a9a9c"/><rect x="425.42" y="6.3" width="0.7" height="1.7" fill="#8a8a8c"/><text x="429.56" y="4.8" font-size="5.2" fill="#c8c8ca" text-anchor="middle" font-family="Liberation Sans">6</text><rect x="433.00" y="6.3" width="0.7" height="1.7" fill="#8a8a8c"/><rect x="436.79" y="5" width="0.7" height="3" fill="#9a9a9c"/><rect x="440.58" y="6.3" width="0.7" height="1.7" fill="#8a8a8c"/><text x="444.72" y="4.8" font-size="5.2" fill="#c8c8ca" text-anchor="middle" font-family="Liberation Sans">7</text><rect x="448.16" y="6.3" width="0.7" height="1.7" fill="#8a8a8c"/><rect x="451.95" y="5" width="0.7" height="3" fill="#9a9a9c"/><rect x="455.74" y="6.3" width="0.7" height="1.7" fill="#8a8a8c"/><text x="459.88" y="4.8" font-size="5.2" fill="#c8c8ca" text-anchor="middle" font-family="Liberation Sans">8</text><rect x="463.32" y="6.3" width="0.7" height="1.7" fill="#8a8a8c"/><rect x="467.11" y="5" width="0.7" height="3" fill="#9a9a9c"/><rect x="470.90" y="6.3" width="0.7" height="1.7" fill="#8a8a8c"/><text x="475.04" y="4.8" font-size="5.2" fill="#c8c8ca" text-anchor="middle" font-family="Liberation Sans">9</text><rect x="478.48" y="6.3" width="0.7" height="1.7" fill="#8a8a8c"/><rect x="482.27" y="5" width="0.7" height="3" fill="#9a9a9c"/><rect x="486.06" y="6.3" width="0.7" height="1.7" fill="#8a8a8c"/><text x="490.20" y="4.8" font-size="5.2" fill="#c8c8ca" text-anchor="middle" font-family="Liberation Sans">10</text><rect x="493.64" y="6.3" width="0.7" height="1.7" fill="#8a8a8c"/><rect x="497.43" y="5" width="0.7" height="3" fill="#9a9a9c"/><rect x="501.22" y="6.3" width="0.7" height="1.7" fill="#8a8a8c"/><text x="505.36" y="4.8" font-size="5.2" fill="#c8c8ca" text-anchor="middle" font-family="Liberation Sans">11</text><rect x="508.80" y="6.3" width="0.7" height="1.7" fill="#8a8a8c"/><rect x="512.59" y="5" width="0.7" height="3" fill="#9a9a9c"/><rect x="516.38" y="6.3" width="0.7" height="1.7" fill="#8a8a8c"/><text x="520.52" y="4.8" font-size="5.2" fill="#c8c8ca" text-anchor="middle" font-family="Liberation Sans">12</text><rect x="523.96" y="6.3" width="0.7" height="1.7" fill="#8a8a8c"/><rect x="527.75" y="5" width="0.7" height="3" fill="#9a9a9c"/><rect x="531.54" y="6.3" width="0.7" height="1.7" fill="#8a8a8c"/><text x="535.68" y="4.8" font-size="5.2" fill="#c8c8ca" text-anchor="middle" font-family="Liberation Sans">13</text><rect x="539.12" y="6.3" width="0.7" height="1.7" fill="#8a8a8c"/><rect x="542.91" y="5" width="0.7" height="3" fill="#9a9a9c"/><rect x="546.70" y="6.3" width="0.7" height="1.7" fill="#8a8a8c"/><text x="550.84" y="4.8" font-size="5.2" fill="#c8c8ca" text-anchor="middle" font-family="Liberation Sans">14</text><rect x="554.28" y="6.3" width="0.7" height="1.7" fill="#8a8a8c"/><rect x="558.07" y="5" width="0.7" height="3" fill="#9a9a9c"/><rect x="561.86" y="6.3" width="0.7" height="1.7" fill="#8a8a8c"/><text x="566.00" y="4.8" font-size="5.2" fill="#c8c8ca" text-anchor="middle" font-family="Liberation Sans">15</text><rect x="569.44" y="6.3" width="0.7" height="1.7" fill="#8a8a8c"/><rect x="573.23" y="5" width="0.7" height="3" fill="#9a9a9c"/><rect x="577.02" y="6.3" width="0.7" height="1.7" fill="#8a8a8c"/><text x="581.16" y="4.8" font-size="5.2" fill="#c8c8ca" text-anchor="middle" font-family="Liberation Sans">16</text><rect x="584.60" y="6.3" width="0.7" height="1.7" fill="#8a8a8c"/><rect x="588.39" y="5" width="0.7" height="3" fill="#9a9a9c"/><rect x="592.18" y="6.3" width="0.7" height="1.7" fill="#8a8a8c"/><rect x="81.0" y="3" width="1" height="6" fill="#c8c8ca"/><rect x="595.0" y="3" width="1" height="6" fill="#c8c8ca"/></svg>
<svg class="a" style="left:126px;top:134px" width="9" height="316" viewBox="0 0 9 316"><rect x="5" y="15.23" width="3" height="0.7" fill="#9a9a9c"/><rect x="6.3" y="19.02" width="1.7" height="0.7" fill="#8a8a8c"/><text x="0" y="0" font-size="5.2" fill="#c8c8ca" text-anchor="middle" font-family="Liberation Sans" transform="translate(3.6 23.16) rotate(-90) translate(0 1.8)">9</text><rect x="6.3" y="26.60" width="1.7" height="0.7" fill="#8a8a8c"/><rect x="5" y="30.39" width="3" height="0.7" fill="#9a9a9c"/><rect x="6.3" y="34.18" width="1.7" height="0.7" fill="#8a8a8c"/><text x="0" y="0" font-size="5.2" fill="#c8c8ca" text-anchor="middle" font-family="Liberation Sans" transform="translate(3.6 38.32) rotate(-90) translate(0 1.8)">8</text><rect x="6.3" y="41.76" width="1.7" height="0.7" fill="#8a8a8c"/><rect x="5" y="45.55" width="3" height="0.7" fill="#9a9a9c"/><rect x="6.3" y="49.34" width="1.7" height="0.7" fill="#8a8a8c"/><text x="0" y="0" font-size="5.2" fill="#c8c8ca" text-anchor="middle" font-family="Liberation Sans" transform="translate(3.6 53.48) rotate(-90) translate(0 1.8)">7</text><rect x="6.3" y="56.92" width="1.7" height="0.7" fill="#8a8a8c"/><rect x="5" y="60.71" width="3" height="0.7" fill="#9a9a9c"/><rect x="6.3" y="64.50" width="1.7" height="0.7" fill="#8a8a8c"/><text x="0" y="0" font-size="5.2" fill="#c8c8ca" text-anchor="middle" font-family="Liberation Sans" transform="translate(3.6 68.64) rotate(-90) translate(0 1.8)">6</text><rect x="6.3" y="72.08" width="1.7" height="0.7" fill="#8a8a8c"/><rect x="5" y="75.87" width="3" height="0.7" fill="#9a9a9c"/><rect x="6.3" y="79.66" width="1.7" height="0.7" fill="#8a8a8c"/><text x="0" y="0" font-size="5.2" fill="#c8c8ca" text-anchor="middle" font-family="Liberation Sans" transform="translate(3.6 83.80) rotate(-90) translate(0 1.8)">5</text><rect x="6.3" y="87.24" width="1.7" height="0.7" fill="#8a8a8c"/><rect x="5" y="91.03" width="3" height="0.7" fill="#9a9a9c"/><rect x="6.3" y="94.82" width="1.7" height="0.7" fill="#8a8a8c"/><text x="0" y="0" font-size="5.2" fill="#c8c8ca" text-anchor="middle" font-family="Liberation Sans" transform="translate(3.6 98.96) rotate(-90) translate(0 1.8)">4</text><rect x="6.3" y="102.40" width="1.7" height="0.7" fill="#8a8a8c"/><rect x="5" y="106.19" width="3" height="0.7" fill="#9a9a9c"/><rect x="6.3" y="109.98" width="1.7" height="0.7" fill="#8a8a8c"/><text x="0" y="0" font-size="5.2" fill="#c8c8ca" text-anchor="middle" font-family="Liberation Sans" transform="translate(3.6 114.12) rotate(-90) translate(0 1.8)">3</text><rect x="6.3" y="117.56" width="1.7" height="0.7" fill="#8a8a8c"/><rect x="5" y="121.35" width="3" height="0.7" fill="#9a9a9c"/><rect x="6.3" y="125.14" width="1.7" height="0.7" fill="#8a8a8c"/><text x="0" y="0" font-size="5.2" fill="#c8c8ca" text-anchor="middle" font-family="Liberation Sans" transform="translate(3.6 129.28) rotate(-90) translate(0 1.8)">2</text><rect x="6.3" y="132.72" width="1.7" height="0.7" fill="#8a8a8c"/><rect x="5" y="136.51" width="3" height="0.7" fill="#9a9a9c"/><rect x="6.3" y="140.30" width="1.7" height="0.7" fill="#8a8a8c"/><text x="0" y="0" font-size="5.2" fill="#c8c8ca" text-anchor="middle" font-family="Liberation Sans" transform="translate(3.6 144.44) rotate(-90) translate(0 1.8)">1</text><rect x="6.3" y="147.88" width="1.7" height="0.7" fill="#8a8a8c"/><rect x="5" y="151.67" width="3" height="0.7" fill="#9a9a9c"/><rect x="6.3" y="155.46" width="1.7" height="0.7" fill="#8a8a8c"/><text x="0" y="0" font-size="5.2" fill="#c8c8ca" text-anchor="middle" font-family="Liberation Sans" transform="translate(3.6 159.60) rotate(-90) translate(0 1.8)">0</text><rect x="6.3" y="163.04" width="1.7" height="0.7" fill="#8a8a8c"/><rect x="5" y="166.83" width="3" height="0.7" fill="#9a9a9c"/><rect x="6.3" y="170.62" width="1.7" height="0.7" fill="#8a8a8c"/><text x="0" y="0" font-size="5.2" fill="#c8c8ca" text-anchor="middle" font-family="Liberation Sans" transform="translate(3.6 174.76) rotate(-90) translate(0 1.8)">1</text><rect x="6.3" y="178.20" width="1.7" height="0.7" fill="#8a8a8c"/><rect x="5" y="181.99" width="3" height="0.7" fill="#9a9a9c"/><rect x="6.3" y="185.78" width="1.7" height="0.7" fill="#8a8a8c"/><text x="0" y="0" font-size="5.2" fill="#c8c8ca" text-anchor="middle" font-family="Liberation Sans" transform="translate(3.6 189.92) rotate(-90) translate(0 1.8)">2</text><rect x="6.3" y="193.36" width="1.7" height="0.7" fill="#8a8a8c"/><rect x="5" y="197.15" width="3" height="0.7" fill="#9a9a9c"/><rect x="6.3" y="200.94" width="1.7" height="0.7" fill="#8a8a8c"/><text x="0" y="0" font-size="5.2" fill="#c8c8ca" text-anchor="middle" font-family="Liberation Sans" transform="translate(3.6 205.08) rotate(-90) translate(0 1.8)">3</text><rect x="6.3" y="208.52" width="1.7" height="0.7" fill="#8a8a8c"/><rect x="5" y="212.31" width="3" height="0.7" fill="#9a9a9c"/><rect x="6.3" y="216.10" width="1.7" height="0.7" fill="#8a8a8c"/><text x="0" y="0" font-size="5.2" fill="#c8c8ca" text-anchor="middle" font-family="Liberation Sans" transform="translate(3.6 220.24) rotate(-90) translate(0 1.8)">4</text><rect x="6.3" y="223.68" width="1.7" height="0.7" fill="#8a8a8c"/><rect x="5" y="227.47" width="3" height="0.7" fill="#9a9a9c"/><rect x="6.3" y="231.26" width="1.7" height="0.7" fill="#8a8a8c"/><text x="0" y="0" font-size="5.2" fill="#c8c8ca" text-anchor="middle" font-family="Liberation Sans" transform="translate(3.6 235.40) rotate(-90) translate(0 1.8)">5</text><rect x="6.3" y="238.84" width="1.7" height="0.7" fill="#8a8a8c"/><rect x="5" y="242.63" width="3" height="0.7" fill="#9a9a9c"/><rect x="6.3" y="246.42" width="1.7" height="0.7" fill="#8a8a8c"/><text x="0" y="0" font-size="5.2" fill="#c8c8ca" text-anchor="middle" font-family="Liberation Sans" transform="translate(3.6 250.56) rotate(-90) translate(0 1.8)">6</text><rect x="6.3" y="254.00" width="1.7" height="0.7" fill="#8a8a8c"/><rect x="5" y="257.79" width="3" height="0.7" fill="#9a9a9c"/><rect x="6.3" y="261.58" width="1.7" height="0.7" fill="#8a8a8c"/><text x="0" y="0" font-size="5.2" fill="#c8c8ca" text-anchor="middle" font-family="Liberation Sans" transform="translate(3.6 265.72) rotate(-90) translate(0 1.8)">7</text><rect x="6.3" y="269.16" width="1.7" height="0.7" fill="#8a8a8c"/><rect x="5" y="272.95" width="3" height="0.7" fill="#9a9a9c"/><rect x="6.3" y="276.74" width="1.7" height="0.7" fill="#8a8a8c"/><text x="0" y="0" font-size="5.2" fill="#c8c8ca" text-anchor="middle" font-family="Liberation Sans" transform="translate(3.6 280.88) rotate(-90) translate(0 1.8)">8</text><rect x="6.3" y="284.32" width="1.7" height="0.7" fill="#8a8a8c"/><rect x="5" y="288.11" width="3" height="0.7" fill="#9a9a9c"/><rect x="6.3" y="291.90" width="1.7" height="0.7" fill="#8a8a8c"/><text x="0" y="0" font-size="5.2" fill="#c8c8ca" text-anchor="middle" font-family="Liberation Sans" transform="translate(3.6 296.04) rotate(-90) translate(0 1.8)">9</text><rect x="6.3" y="299.48" width="1.7" height="0.7" fill="#8a8a8c"/><rect x="5" y="303.27" width="3" height="0.7" fill="#9a9a9c"/><rect x="3" y="14.5" width="6" height="1" fill="#c8c8ca"/><rect x="3" y="303.5" width="6" height="1" fill="#c8c8ca"/></svg>

<!-- slide -->
<div class="a" style="left:207.5px;top:149px;width:515.5px;height:289.5px;background:#fff"></div>

<!-- slide content -->
<div class="a" style="left:216.7px;top:157.1px;width:111.1px;height:31px;border:1px solid #7a7a7a;background:#fff"></div>
<svg class="a" style="left:217px;top:157px" width="111" height="31" viewBox="0 0 111 31">
<defs>
<linearGradient id="g30" x1="0" y1="0" x2="1" y2="0"><stop offset="0" stop-color="#1a9ad8"/><stop offset="0.45" stop-color="#3a5ac8"/><stop offset="0.6" stop-color="#8a2ab0"/><stop offset="1" stop-color="#e8204a"/></linearGradient>
<linearGradient id="gpl" x1="0" y1="0" x2="1" y2="0"><stop offset="0" stop-color="#1a8ad8"/><stop offset="0.5" stop-color="#7a3ab0"/><stop offset="0.8" stop-color="#d8305a"/><stop offset="1" stop-color="#f07a2a"/></linearGradient>
</defs>
<text x="5" y="26.6" font-family="Liberation Sans" font-weight="bold" font-size="33" fill="url(#g30)" textLength="24.5" lengthAdjust="spacingAndGlyphs">30</text>
<path d="M17.6 3L19.3 6.5V24.5L17.6 28L15.9 24.5V6.5Z" fill="none" stroke="#6a5ac8" stroke-width="0.7"/>
<text x="30" y="10" font-family="Liberation Sans" font-weight="bold" font-size="5.5" fill="#f07a3a">th</text>
<text x="41.2" y="14.4" font-family="Liberation Sans" font-weight="bold" font-size="11.6" fill="url(#gpl)" textLength="63.5" lengthAdjust="spacingAndGlyphs">PLANOLOGI</text>
<text x="59" y="24.5" font-family="Liberation Serif" font-style="italic" font-weight="bold" font-size="12" fill="#1a1a1a" textLength="46" lengthAdjust="spacingAndGlyphs" transform="rotate(-5 59 24.5)">Bersinergi</text>
</svg>
<svg class="a" style="left:578px;top:158px" width="16" height="19" viewBox="0 0 16 19"><path d="M8 0.3C11.5 0.3 15 2.5 15 8C15 13 12.5 16.5 8 18.5C3.5 16.5 1 13 1 8C1 2.5 4.5 0.3 8 0.3Z" fill="#3a2a22"/><path d="M8 3C10.5 3 12.8 4.5 12.8 7.3C12.8 10.5 10.5 13.8 8 15.2C5.5 13.8 3.2 10.5 3.2 7.3C3.2 4.5 5.5 3 8 3Z" fill="#e8dcc8"/><rect x="6" y="6" width="4" height="5" fill="#b8924a"/></svg>
<div class="t" style="left:597.3px;top:157.9px;font-size:15.7px;font-weight:bold;color:#f07b27">UNDIP</div>
<div class="a" style="left:649.4px;top:159.5px;width:0.8px;height:11px;background:#f07b27"></div>
<div class="t" style="left:651.9px;top:159.4px;font-size:5.55px;color:#4a4a4a">UNIVERSITAS</div>
<div class="t" style="left:651.9px;top:166.1px;font-size:5.43px;color:#f08a3a">DIPONEGORO</div>
<div class="t" style="left:599.5px;top:172.2px;font-size:5.6px;color:#333;transform:scaleX(0.86);transform-origin:0 0">The Excellent Research University</div>
<div class="t" style="left:313.75px;top:225.6px;font-size:31px;color:#111;transform:scaleX(0.916);transform-origin:0 0">The Future of Jakarta in</div>
<div class="t" style="left:326.6px;top:259.5px;font-size:31px;color:#111;transform:scaleX(0.900);transform-origin:0 0">&#8216;SeaCities&#8217; Perspective</div>
<svg class="a" style="left:333px;top:287px" width="117" height="3" viewBox="0 0 117 3"><path d="M0 1.5Q1 0 2 1.5T4 1.5T6 1.5T8 1.5T10 1.5T12 1.5T14 1.5T16 1.5T18 1.5T20 1.5T22 1.5T24 1.5T26 1.5T28 1.5T30 1.5T32 1.5T34 1.5T36 1.5T38 1.5T40 1.5T42 1.5T44 1.5T46 1.5T48 1.5T50 1.5T52 1.5T54 1.5T56 1.5T58 1.5T60 1.5T62 1.5T64 1.5T66 1.5T68 1.5T70 1.5T72 1.5T74 1.5T76 1.5T78 1.5T80 1.5T82 1.5T84 1.5T86 1.5T88 1.5T90 1.5T92 1.5T94 1.5T96 1.5T98 1.5T100 1.5T102 1.5T104 1.5T106 1.5T108 1.5T110 1.5T112 1.5T114 1.5T116 1.5" stroke="#e8848c" stroke-width="0.7" fill="none"/></svg>
<div class="t" style="left:413px;top:336.9px;font-size:12px;color:#222;transform:scaleX(0.93);transform-origin:0 0">Rukuh Setiadi, Ph.D.</div>
<div class="a" style="left:413px;top:348px;width:57px;height:0.8px;background:#f2b0b6"></div>
<div class="t" style="left:383.9px;top:354.2px;font-size:11.9px;color:#2b6fc9">rukuh.setiadi@pwk.undip.ac.id</div>
<div class="a" style="left:383.9px;top:366.4px;width:161.7px;height:0.9px;background:#2b6fc9"></div>

<!-- notes & status -->
<div class="t" style="left:130px;top:455.2px;font-size:7.4px;color:#e4e4e4;transform:scaleX(0.93);transform-origin:0 0">Click to add notes</div>
<div class="t" style="left:33.75px;top:493px;font-size:6.6px;color:#bdbdbf">Slide 1 of 15</div>
<div class="t" style="left:80.6px;top:493px;font-size:6.8px;color:#bdbdbf">English (United States)</div>
<svg class="a" style="left:498.4px;top:491.5px" width="8" height="8" viewBox="0 0 8 8"><rect x="2.5" y="0.5" width="3" height="1" fill="#c8c8ca"/><rect x="0" y="2.8" width="8" height="1.2" fill="#c8c8ca"/><rect x="1" y="5" width="6" height="0.8" fill="#c8c8ca"/><rect x="1" y="6.6" width="6" height="0.8" fill="#c8c8ca"/></svg>
<div class="t" style="left:507.6px;top:492.9px;font-size:6.93px;color:#c8c8ca">Notes</div>
<svg class="a" style="left:536.6px;top:491.5px" width="8" height="8" viewBox="0 0 8 8"><path d="M0 0.5H7.5V5.5H3L1.2 7.5V5.5H0Z" fill="#d8d8da"/></svg>
<div class="t" style="left:545.9px;top:492.9px;font-size:6.62px;color:#c8c8ca">Comments</div>
<div class="a" style="left:584px;top:489px;width:19.9px;height:12.3px;background:#4c4c4e"></div>
<svg class="a" style="left:589.8px;top:491px" width="8.5" height="8" viewBox="0 0 8.5 8"><rect x="0" y="0" width="8.5" height="8" fill="#eee"/><rect x="2.8" y="1.3" width="4.5" height="1.4" fill="#555"/><rect x="1.8" y="0" width="0.6" height="8" fill="#777"/></svg>
<svg class="a" style="left:608.6px;top:491.5px" width="9" height="7.5" viewBox="0 0 9 7.5"><rect x="0" y="0" width="4" height="3.2" fill="#eee"/><rect x="5" y="0" width="4" height="3.2" fill="#eee"/><rect x="0" y="4.3" width="4" height="3.2" fill="#eee"/><rect x="5" y="4.3" width="4" height="3.2" fill="#eee"/></svg>
<svg class="a" style="left:628px;top:491.3px" width="9" height="8" viewBox="0 0 9 8"><path d="M0.5 0.5H8.5V6.8H5L4.5 7.5L4 6.8H0.5Z" fill="none" stroke="#ddd" stroke-width="0.8"/><path d="M4.5 0.5V6.8M1.5 2H3.5M1.5 3.5H3.5M1.5 5H3.5M5.5 2H7.5M5.5 3.5H7.5M5.5 5H7.5" stroke="#ddd" stroke-width="0.5"/></svg>
<div class="a" style="left:642px;top:489px;width:19.4px;height:12.3px;background:#4c4c4e"></div>
<svg class="a" style="left:647px;top:491.5px" width="9" height="8" viewBox="0 0 9 8"><rect x="0.5" y="0.5" width="8" height="6" fill="none" stroke="#aaa" stroke-width="0.8"/><rect x="2.5" y="2" width="4" height="3" fill="#888"/></svg>
<svg class="a" style="left:650.5px;top:495.5px" width="6" height="8" viewBox="0 0 6 8"><path d="M0.5 0.5V6.5L2 5.2L3.3 7.6L4.3 7.1L3.1 4.8H5Z" fill="#111" stroke="#ddd" stroke-width="0.5"/></svg>
<div class="a" style="left:664.6px;top:494.8px;width:4.9px;height:1.1px;background:#d8d8da"></div>
<div class="a" style="left:673.4px;top:494.5px;width:53.1px;height:1.7px;background:#78787a;border-radius:1px"></div>
<div class="a" style="left:695.4px;top:490.9px;width:8.8px;height:8.8px;border-radius:50%;background:#9c9c9e"></div>
<div class="a" style="left:729.9px;top:494.8px;width:5.2px;height:1.1px;background:#e0e0e2"></div>
<div class="a" style="left:731.95px;top:492.8px;width:1.1px;height:5.1px;background:#e0e0e2"></div>
<div class="t" style="left:743.7px;top:492.9px;font-size:6.76px;color:#bdbdbf">100%</div>
<svg class="a" style="left:770.8px;top:491.6px" width="8" height="7.4" viewBox="0 0 8 7.4"><rect x="0.4" y="0.4" width="7.2" height="6.6" fill="none" stroke="#d0d0d0" stroke-width="0.8"/><path d="M1.5 1.5L3.3 3.1M1.5 1.5H2.9M1.5 1.5V2.8M6.5 1.5L4.7 3.1M6.5 1.5H5.1M6.5 1.5V2.8M1.5 5.9L3.3 4.3M1.5 5.9H2.9M1.5 5.9V4.6M6.5 5.9L4.7 4.3M6.5 5.9H5.1M6.5 5.9V4.6" stroke="#d0d0d0" stroke-width="0.7"/></svg>

<!-- video feed -->
<div class="a" style="left:818px;top:224px;width:201px;height:113.6px;background:#e3e3e5;overflow:hidden">
<svg class="a" style="left:0;top:0;filter:blur(0.35px)" width="201" height="113.6" viewBox="0 0 201 113.6"><rect x="0" y="0" width="201" height="6" fill="#f4f4f4"/><rect x="0" y="0.4" width="9.6" height="5.4" fill="#1a3a6a"/><rect x="11.6" y="0.4" width="10" height="5.4" fill="#e5243b"/><rect x="23.6" y="0.4" width="10" height="5.4" fill="#dda63a"/><rect x="35.6" y="0.4" width="10" height="5.4" fill="#4c9f38"/><rect x="47.6" y="0.4" width="10" height="5.4" fill="#c5192d"/><rect x="59.6" y="0.4" width="10" height="5.4" fill="#ff3a21"/><rect x="71.6" y="0.4" width="10" height="5.4" fill="#26bde2"/><rect x="83.6" y="0.4" width="10" height="5.4" fill="#fcc30b"/><rect x="95.6" y="0.4" width="10" height="5.4" fill="#a21942"/><rect x="107.6" y="0.4" width="10" height="5.4" fill="#fd6925"/><rect x="119.6" y="0.4" width="10" height="5.4" fill="#dd1367"/><rect x="131.6" y="0.4" width="10" height="5.4" fill="#fd9d24"/><rect x="143.6" y="0.4" width="10" height="5.4" fill="#bf8b2e"/><rect x="155.6" y="0.4" width="10" height="5.4" fill="#3f7e44"/><rect x="167.6" y="0.4" width="10" height="5.4" fill="#0a97d9"/><rect x="179.6" y="0.4" width="10" height="5.4" fill="#56c02b"/><rect x="191.6" y="0.4" width="10" height="5.4" fill="#19386a"/><text x="4.2" y="14.3" font-family="Liberation Sans" font-weight="bold" font-size="5.6" fill="#34526e" textLength="112" lengthAdjust="spacingAndGlyphs">URBAN AND REGIONAL SCIENTIFIC FORUM (URSF)</text><text x="4.2" y="22" font-family="Liberation Sans" font-weight="bold" font-size="6.8" fill="#3a3a3c" textLength="118" lengthAdjust="spacingAndGlyphs">INTERNATIONAL LECTURE SERIES 2021</text><rect x="0" y="25" width="81.5" height="9.7" fill="#1d4a6b"/><text x="4.2" y="31.6" font-family="Liberation Sans" font-weight="bold" font-size="4.6" fill="#e8eef4" textLength="55" lengthAdjust="spacingAndGlyphs">THE FUTURE OF SEA CITIES</text><rect x="151.3" y="10.5" width="60" height="14.3" rx="7.15" fill="#1d4a6b"/><circle cx="159" cy="17.6" r="5" fill="#e8e8ea"/><text x="166" y="17.2" font-family="Liberation Sans" font-weight="bold" font-size="5.5" fill="#e8eef4" textLength="30" lengthAdjust="spacingAndGlyphs">SERIES #06</text><text x="166" y="22" font-family="Liberation Sans" font-weight="bold" font-size="2.8" fill="#c8d4e0" textLength="31" lengthAdjust="spacingAndGlyphs">Friday, 29th October 2021</text><rect x="167.6" y="104.3" width="9.7" height="9.5" fill="#0a7ac8"/><rect x="179.6" y="104.3" width="9.7" height="9.5" fill="#2aa83a"/><rect x="191.6" y="104.3" width="9.7" height="9.5" fill="#19386a"/><rect x="160" y="92.5" width="12.5" height="1.1" fill="#444"/><rect x="160" y="95" width="12.5" height="1.1" fill="#444"/><rect x="160" y="97.6" width="12.5" height="1.1" fill="#444"/><ellipse cx="179.4" cy="95.5" rx="4.7" ry="5.3" fill="#2a2420"/><ellipse cx="179.4" cy="95.5" rx="2.8" ry="3.3" fill="#e0d4b8"/><text x="186" y="99" font-family="Liberation Sans" font-weight="bold" font-size="10" fill="#2a8ad8" textLength="10" lengthAdjust="spacingAndGlyphs">30</text><rect x="191" y="91" width="4.5" height="9" fill="#e0306a" opacity=".7"/><path d="M38 113.6L42 90L52 80L65 75.4L83.3 71.5H116L134.2 77L150 85L162 92.6L170 113.6Z" fill="#8090a6"/><path d="M83.3 71.5L78 80L84 100L88 113.6H96L90 90Z" fill="#66768c"/><path d="M116 71.5L122 80L114 100L112 113.6H104L110 90Z" fill="#66768c"/><path d="M54 113.6L50 95L56 84L60 80L62 90L64 113.6Z" fill="#7a8aa0" opacity=".7"/><path d="M140 113.6L146 95L152 88L156 100L152 113.6Z" fill="#7a8aa0" opacity=".6"/><path d="M87 74L100 72L114 74L108 113.6H91Z" fill="#8a5a6a"/><rect x="88" y="84" width="24" height="2.5" fill="#b04050" opacity=".6"/><rect x="88" y="92" width="24" height="2.5" fill="#4a5aa0" opacity=".6"/><rect x="88" y="100" width="24" height="2.5" fill="#e0e0e8" opacity=".6"/><rect x="88" y="107" width="24" height="2.5" fill="#b04050" opacity=".6"/><rect x="93" y="76" width="2" height="37.6" fill="#2a3a8a" opacity=".6"/><rect x="99" y="76" width="2" height="37.6" fill="#e8e8f0" opacity=".5"/><rect x="105" y="76" width="2" height="37.6" fill="#2a3a8a" opacity=".6"/><path d="M88 64H112L112 74L100 78L88 74Z" fill="#a88070"/><ellipse cx="120.5" cy="55" rx="3" ry="7.5" fill="#a88070"/><ellipse cx="80.3" cy="55" rx="2.5" ry="7" fill="#a88070"/><path d="M82 36C82 30 90 27 100.5 27C111 27 119 30 119 36L119.5 56C119 66 113 72.5 99 73.5C87 72.5 82 66 81.5 56Z" fill="#bc9888"/><path d="M84 60Q100 68 117 60L116 66Q100 75 86 66Z" fill="#a8847a" opacity=".55"/><path d="M93 64.5Q100 62.5 107 64.5" stroke="#7a5048" stroke-width="1.2" fill="none"/><path d="M97 52L96 60H104L103 52Z" fill="#b89484" opacity=".6"/><path d="M79.4 48C77 30 82 18.7 101 18.7C120 18.7 124.5 30 122.6 46L119.5 47C119.5 36 115 28.3 101 28.3C87 28.3 82.5 36 82.3 48Z" fill="#1e1a1a"/><path d="M80 34C88 26 98 25 106 26C114 26 120 30 122 36L122.5 30C119 22 111 18.7 101 18.7C90 18.7 83 22 80.5 28Z" fill="#1a1616"/><rect x="79.5" y="45.3" width="19" height="11" rx="5.2" fill="none" stroke="#8eaabd" stroke-width="1.7"/><rect x="100.5" y="45.3" width="18" height="11" rx="5.2" fill="none" stroke="#8eaabd" stroke-width="1.7"/><path d="M98.5 49H100.5" stroke="#94b4c8" stroke-width="1.5"/><ellipse cx="89.5" cy="51" rx="3.5" ry="1.6" fill="#6a4a42" opacity=".45"/><ellipse cx="109.5" cy="51" rx="3.5" ry="1.6" fill="#6a4a42" opacity=".45"/></svg>
<div class="a" style="left:0;top:98px;width:81px;height:15.6px;background:rgba(50,50,52,0.72)"></div>
<svg class="a" style="left:1.5px;top:101.5px" width="12" height="10" viewBox="0 0 12 10"><rect x="0" y="7" width="1.8" height="3" fill="#fff"/><rect x="3" y="5" width="1.8" height="5" fill="#fff"/><rect x="6" y="2.5" width="1.8" height="7.5" fill="#fff"/><rect x="9" y="0" width="1.8" height="10" fill="#fff"/></svg>
<div class="t" style="left:17px;top:100.2px;font-size:9.6px;color:#f0f0f0;transform:scaleX(0.96);transform-origin:0 0">Rukuh Setiadi</div>
</div>

</body></html>
